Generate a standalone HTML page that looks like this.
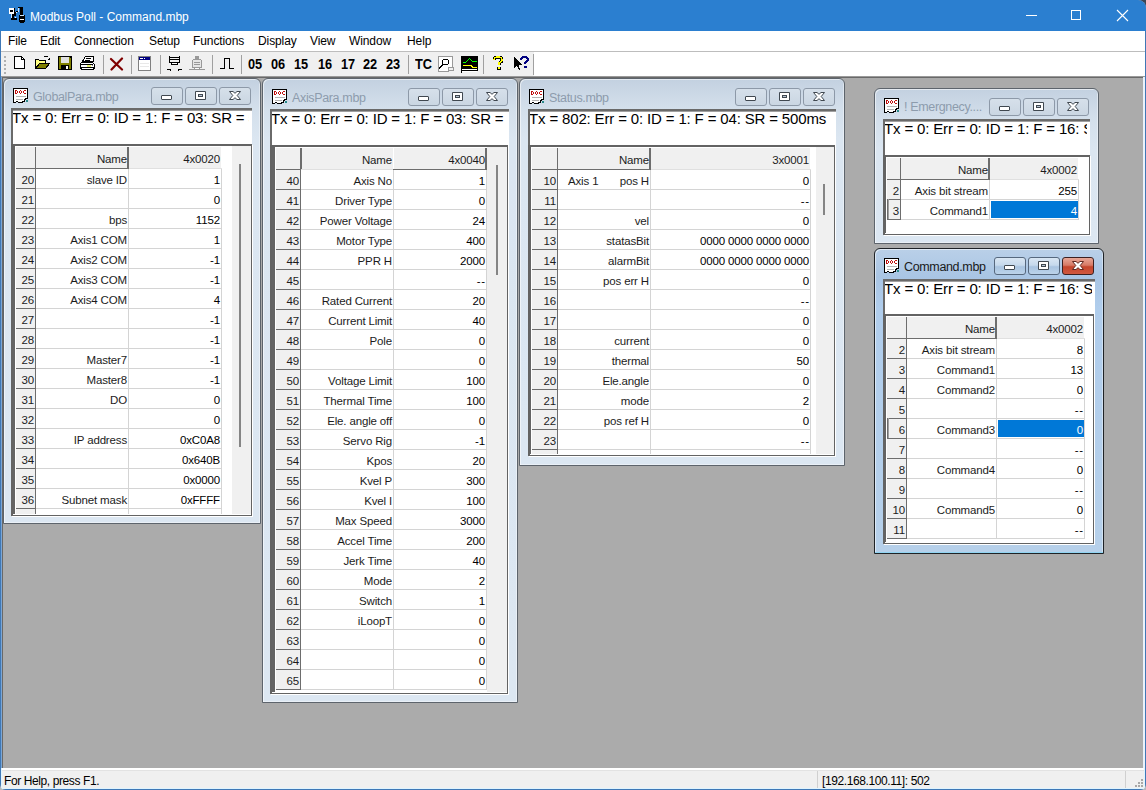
<!DOCTYPE html><html><head><meta charset="utf-8"><style>html,body{margin:0;padding:0;width:1146px;height:790px;overflow:hidden;background:#b4b8bc}</style></head><body><div style="position:absolute;left:1136px;top:0;width:10px;height:10px;background:#3a4656"></div>
<div style="position:absolute;left:0;top:0;width:1146px;height:790px;background:#ababab;overflow:hidden;border-radius:0 8px 6px 6px">
<div style="position:absolute;left:0px;top:0px;width:1146px;height:31px;background:#2b7fd0"></div>
<svg style="position:absolute;left:8px;top:6px" width="18" height="17" viewBox="0 0 18 17" shape-rendering="crispEdges"><rect x="1" y="2" width="6" height="6" fill="#000"/><rect x="1" y="2" width="5" height="6" fill="#fff"/><rect x="2" y="4" width="3" height="2" fill="#000"/><rect x="3" y="8" width="1" height="5" fill="#cfe8ff"/><rect x="4" y="8" width="2" height="5" fill="#000"/><rect x="3" y="12" width="6" height="2" fill="#000"/><rect x="7" y="11" width="1" height="1" fill="#fff"/><rect x="6" y="6" width="2" height="4" fill="#000"/><rect x="8" y="6" width="1" height="1" fill="#fff"/><rect x="8" y="5" width="2" height="1" fill="#000"/><rect x="10" y="1" width="5" height="1" fill="#000"/><rect x="10" y="2" width="1" height="4" fill="#cfe8ff"/><rect x="12" y="1" width="3" height="8" fill="#000"/><rect x="11" y="9" width="6" height="7" fill="#000"/><rect x="12" y="9" width="4" height="1" fill="#cfe8ff"/><rect x="12" y="13" width="4" height="1" fill="#fff"/><rect x="12" y="16" width="4" height="1" fill="#000"/></svg>
<div style="position:absolute;left:30px;top:10px;text-align:left;white-space:pre;font:12px 'Liberation Sans', sans-serif;color:#fff;line-height:14px">Modbus Poll - Command.mbp</div>
<div style="position:absolute;left:1026px;top:15px;width:11px;height:1px;background:#fff"></div>
<div style="position:absolute;left:1071px;top:10px;width:8px;height:8px;border:1px solid #fff"></div>
<svg style="position:absolute;left:1116px;top:9px" width="13" height="13"><path d="M1 1L12 12M12 1L1 12" stroke="#fff" stroke-width="1.1"/></svg>
<div style="position:absolute;left:0px;top:31px;width:1px;height:759px;background:#3f78b6"></div>
<div style="position:absolute;left:1145px;top:31px;width:1px;height:759px;background:#3f78b6"></div>
<div style="position:absolute;left:0px;top:789px;width:1146px;height:1px;background:#3f78b6"></div>
<div style="position:absolute;left:1px;top:31px;width:1144px;height:20px;background:#fff"></div>
<div style="position:absolute;left:8px;top:34px;text-align:left;white-space:pre;font:12px 'Liberation Sans', sans-serif;color:#000;line-height:14px;letter-spacing:-0.1px">File</div>
<div style="position:absolute;left:40px;top:34px;text-align:left;white-space:pre;font:12px 'Liberation Sans', sans-serif;color:#000;line-height:14px;letter-spacing:-0.1px">Edit</div>
<div style="position:absolute;left:74px;top:34px;text-align:left;white-space:pre;font:12px 'Liberation Sans', sans-serif;color:#000;line-height:14px;letter-spacing:-0.1px">Connection</div>
<div style="position:absolute;left:149px;top:34px;text-align:left;white-space:pre;font:12px 'Liberation Sans', sans-serif;color:#000;line-height:14px;letter-spacing:-0.1px">Setup</div>
<div style="position:absolute;left:193px;top:34px;text-align:left;white-space:pre;font:12px 'Liberation Sans', sans-serif;color:#000;line-height:14px;letter-spacing:-0.1px">Functions</div>
<div style="position:absolute;left:258px;top:34px;text-align:left;white-space:pre;font:12px 'Liberation Sans', sans-serif;color:#000;line-height:14px;letter-spacing:-0.1px">Display</div>
<div style="position:absolute;left:310px;top:34px;text-align:left;white-space:pre;font:12px 'Liberation Sans', sans-serif;color:#000;line-height:14px;letter-spacing:-0.1px">View</div>
<div style="position:absolute;left:349px;top:34px;text-align:left;white-space:pre;font:12px 'Liberation Sans', sans-serif;color:#000;line-height:14px;letter-spacing:-0.1px">Window</div>
<div style="position:absolute;left:407px;top:34px;text-align:left;white-space:pre;font:12px 'Liberation Sans', sans-serif;color:#000;line-height:14px;letter-spacing:-0.1px">Help</div>
<div style="position:absolute;left:1px;top:51px;width:1144px;height:1px;background:#bdbdbd"></div>
<div style="position:absolute;left:1px;top:52px;width:1144px;height:24px;background:#fff"></div>
<div style="position:absolute;left:1px;top:52px;width:533px;height:24px;background:#f0f0f0"></div>
<div style="position:absolute;left:533px;top:54px;width:1px;height:21px;background:#a0a0a0"></div>
<div style="position:absolute;left:4px;top:56px;width:2px;height:2px;background:#b0b0b0"></div>
<div style="position:absolute;left:4px;top:60px;width:2px;height:2px;background:#b0b0b0"></div>
<div style="position:absolute;left:4px;top:64px;width:2px;height:2px;background:#b0b0b0"></div>
<div style="position:absolute;left:4px;top:68px;width:2px;height:2px;background:#b0b0b0"></div>
<div style="position:absolute;left:4px;top:72px;width:2px;height:2px;background:#b0b0b0"></div>
<div style="position:absolute;left:103px;top:55px;width:1px;height:19px;background:#a0a0a0"></div>
<div style="position:absolute;left:131px;top:55px;width:1px;height:19px;background:#a0a0a0"></div>
<div style="position:absolute;left:160px;top:55px;width:1px;height:19px;background:#a0a0a0"></div>
<div style="position:absolute;left:212px;top:55px;width:1px;height:19px;background:#a0a0a0"></div>
<div style="position:absolute;left:241px;top:55px;width:1px;height:19px;background:#a0a0a0"></div>
<div style="position:absolute;left:408px;top:55px;width:1px;height:19px;background:#a0a0a0"></div>
<div style="position:absolute;left:483px;top:55px;width:1px;height:19px;background:#a0a0a0"></div>
<div style="position:absolute;left:248px;top:56px;white-space:pre;font:bold 14.5px 'Liberation Sans', sans-serif;color:#000;line-height:16px;transform:scaleX(0.88);transform-origin:0 0">05</div>
<div style="position:absolute;left:271px;top:56px;white-space:pre;font:bold 14.5px 'Liberation Sans', sans-serif;color:#000;line-height:16px;transform:scaleX(0.88);transform-origin:0 0">06</div>
<div style="position:absolute;left:294px;top:56px;white-space:pre;font:bold 14.5px 'Liberation Sans', sans-serif;color:#000;line-height:16px;transform:scaleX(0.88);transform-origin:0 0">15</div>
<div style="position:absolute;left:318px;top:56px;white-space:pre;font:bold 14.5px 'Liberation Sans', sans-serif;color:#000;line-height:16px;transform:scaleX(0.88);transform-origin:0 0">16</div>
<div style="position:absolute;left:341px;top:56px;white-space:pre;font:bold 14.5px 'Liberation Sans', sans-serif;color:#000;line-height:16px;transform:scaleX(0.88);transform-origin:0 0">17</div>
<div style="position:absolute;left:363px;top:56px;white-space:pre;font:bold 14.5px 'Liberation Sans', sans-serif;color:#000;line-height:16px;transform:scaleX(0.88);transform-origin:0 0">22</div>
<div style="position:absolute;left:386px;top:56px;white-space:pre;font:bold 14.5px 'Liberation Sans', sans-serif;color:#000;line-height:16px;transform:scaleX(0.88);transform-origin:0 0">23</div>
<div style="position:absolute;left:415px;top:56px;white-space:pre;font:bold 14.5px 'Liberation Sans', sans-serif;color:#000;line-height:16px;transform:scaleX(0.88);transform-origin:0 0">TC</div>
<svg style="position:absolute;left:14px;top:56px" width="12" height="14" viewBox="0 0 12 14" shape-rendering="crispEdges"><path d="M0.5 0.5H7.5L10.5 3.5V12.5H0.5Z" fill="#fff" stroke="#000"/><path d="M7.5 0.5V3.5H10.5" fill="none" stroke="#000"/></svg>
<svg style="position:absolute;left:32px;top:53px" width="20" height="20" viewBox="0 0 20 20" shape-rendering="crispEdges"><path d="M3.5 15.5V6.5H6.5L7.5 7.5H13.5V10.5" fill="#ffff80" stroke="#000"/><path d="M7.5 10.5H17.5L13.5 15.5H3.5Z" fill="#808000" stroke="#000"/><path d="M11.5 4.5L12.5 3.5H15.5L16.5 4.5" fill="none" stroke="#000"/><path d="M15 7H18V4Z" fill="#000"/></svg>
<svg style="position:absolute;left:58px;top:56px" width="15" height="15" viewBox="0 0 15 15" shape-rendering="crispEdges"><rect x="0.5" y="0.5" width="13" height="13" fill="#808000" stroke="#000"/><rect x="3" y="1" width="8" height="6" fill="#e0e0e0"/><rect x="3" y="9" width="8" height="5" fill="#000"/><rect x="8" y="10" width="2" height="3" fill="#fff"/><rect x="12" y="1" width="1" height="1" fill="#000"/></svg>
<svg style="position:absolute;left:78px;top:53px" width="20" height="20" viewBox="0 0 20 20" shape-rendering="crispEdges"><path d="M7.5 3.5H15.5V8.5H4.5Z" fill="#fff" stroke="#000"/><path d="M8 5.5H13M7 7.5H12" stroke="#000"/><path d="M2.5 10.5L3.5 9.5H14.5L16.5 11.5V14.5L15.5 16.5H3.5L2.5 14.5Z" fill="#fff" stroke="#000"/><path d="M3 11.5H15M3 14.5H16" stroke="#000"/><rect x="9" y="12" width="4" height="2" fill="#e8f070"/><rect x="14" y="9" width="1" height="1" fill="#000"/><rect x="15" y="10" width="1" height="1" fill="#000"/><rect x="14" y="12" width="1" height="1" fill="#888"/></svg>
<svg style="position:absolute;left:109px;top:57px" width="16" height="15"><path d="M2 2L13 12.5M13 1.5L2.5 12.5" stroke="#800000" stroke-width="2.2" stroke-linecap="round"/></svg>
<svg style="position:absolute;left:138px;top:56px" width="13" height="15" viewBox="0 0 13 15" shape-rendering="crispEdges"><rect x="0.5" y="0.5" width="12" height="14" fill="#fff" stroke="#808080"/><rect x="1" y="1" width="11" height="3" fill="#000080"/><rect x="2" y="2" width="3" height="1" fill="#fff"/><rect x="6" y="2" width="1" height="1" fill="#fff"/><path d="M2 7.5H11M2 10.5H11" stroke="#e8e8e8"/></svg>
<svg style="position:absolute;left:166px;top:55px" width="18" height="17" viewBox="0 0 18 17" shape-rendering="crispEdges"><path d="M3.5 1V7.5H13.5V1" fill="none" stroke="#000"/><path d="M4 2.5H13M4 4.5H13" stroke="#000"/><rect x="5.5" y="7.5" width="6" height="2" fill="#fff" stroke="#000"/><path d="M1 14.5H4.5V15.5" fill="none" stroke="#000"/><path d="M16 14.5H12.5V15.5" fill="none" stroke="#000"/></svg>
<svg style="position:absolute;left:189px;top:55px" width="18" height="17" viewBox="0 0 18 17" shape-rendering="crispEdges"><rect x="6" y="1" width="4" height="3" fill="#999"/><path d="M3.5 5.5L4.5 4.5H11.5L12.5 5.5V12.5H3.5Z" fill="#e6e6e6" stroke="#999"/><path d="M5 7.5H11M5 9.5H11" stroke="#999"/><path d="M0 14.5H16" stroke="#999"/><rect x="5.5" y="12.5" width="5" height="2" fill="#fff" stroke="#999"/></svg>
<svg style="position:absolute;left:219px;top:57px" width="16" height="13" viewBox="0 0 16 13" shape-rendering="crispEdges"><path d="M1 11.5H5.5V1.5H10.5V11.5H15" fill="none" stroke="#000" stroke-width="1.6"/></svg>
<svg style="position:absolute;left:437px;top:56px" width="18" height="17" viewBox="0 0 18 17" shape-rendering="crispEdges"><path d="M1.5 0.5H15.5V11.5H11.5V15.5H1.5Z" fill="#fff" stroke="#999"/><path d="M11.5 11.5H16.5V14.5H11.5" fill="none" stroke="#999"/><circle cx="8.5" cy="6" r="3" fill="#fff" stroke="#000"/><path d="M6.5 8L2 12.5" stroke="#000" stroke-width="2"/></svg>
<svg style="position:absolute;left:461px;top:56px" width="17" height="17" viewBox="0 0 17 17" shape-rendering="crispEdges"><rect x="1" y="0" width="16" height="15" fill="#000"/><rect x="0" y="0" width="1" height="17" fill="#000"/><path d="M1.5 6.5H4.5L8.5 2.5L11.5 5.5H16" fill="none" stroke="#00ff00"/><path d="M1.5 9.5H10.5L11.5 11.5H16" fill="none" stroke="#ffff00"/><path d="M1 13.5H16M1 15.5H16" stroke="#fff"/></svg>
<svg style="position:absolute;left:492px;top:56px" width="12" height="14" viewBox="0 0 12 14" shape-rendering="crispEdges"><path d="M2 4Q2 1 6 1Q10 1 10 4Q10 6 7 7V9" fill="none" stroke="#000" stroke-width="3"/><path d="M2 4Q2 1 6 1Q10 1 10 4Q10 6 7 7V9" fill="none" stroke="#ffff00" stroke-width="1.4"/><rect x="5" y="10.5" width="3.5" height="3" fill="#000"/><rect x="6" y="11" width="1.5" height="1.5" fill="#ff0"/></svg>
<svg style="position:absolute;left:513px;top:56px" width="18" height="15" viewBox="0 0 18 15" shape-rendering="crispEdges"><path d="M1 1V12L3.5 9.5L6 14H7.5L5.5 9H9Z" fill="#000"/><path d="M8 4Q8 1 11.5 1Q15 1 15 3.5Q15 5 12 6.5V8" fill="none" stroke="#000080" stroke-width="2.2"/><rect x="10.5" y="9.5" width="3" height="2" fill="#000080"/></svg>
<div style="position:absolute;left:1px;top:76px;width:1144px;height:1px;background:#9a9a9a"></div>
<div style="position:absolute;left:1px;top:77px;width:1144px;height:1px;background:#696969"></div>
<div style="position:absolute;left:1px;top:77px;width:1px;height:691px;background:#7aa6d6"></div>
<div style="position:absolute;left:2px;top:77px;width:1px;height:691px;background:#696969"></div>
<div style="position:absolute;left:1143px;top:77px;width:2px;height:691px;background:#eaf2fa"></div>
<div style="position:absolute;left:1px;top:768px;width:1144px;height:2px;background:#fff"></div>
<div style="position:absolute;left:1px;top:770px;width:1144px;height:1px;background:#e3e3e3"></div>
<div style="position:absolute;left:1px;top:771px;width:1144px;height:18px;background:#f0f0f0"></div>
<div style="position:absolute;left:817px;top:771px;width:1px;height:17px;background:#d0d0d0"></div>
<div style="position:absolute;left:1125px;top:771px;width:1px;height:17px;background:#d0d0d0"></div>
<div style="position:absolute;left:4px;top:774px;text-align:left;white-space:pre;font:12px 'Liberation Sans', sans-serif;color:#000;line-height:14px;letter-spacing:-0.4px">For Help, press F1.</div>
<div style="position:absolute;left:822px;top:774px;text-align:left;white-space:pre;font:12px 'Liberation Sans', sans-serif;color:#000;line-height:14px;letter-spacing:-0.4px">[192.168.100.11]: 502</div>
<div style="position:absolute;left:1px;top:768px;width:1px;height:21px;background:#dff4ff"></div>
<div style="position:absolute;left:1144px;top:768px;width:1px;height:21px;background:#dff4ff"></div>
<div style="position:absolute;left:1px;top:788px;width:1144px;height:1px;background:#dff4ff"></div>
<div style="position:absolute;left:1141px;top:779px;width:2px;height:2px;background:#a8a8a8"></div>
<div style="position:absolute;left:1138px;top:782px;width:2px;height:2px;background:#a8a8a8"></div>
<div style="position:absolute;left:1141px;top:782px;width:2px;height:2px;background:#a8a8a8"></div>
<div style="position:absolute;left:1135px;top:785px;width:2px;height:2px;background:#a8a8a8"></div>
<div style="position:absolute;left:1138px;top:785px;width:2px;height:2px;background:#a8a8a8"></div>
<div style="position:absolute;left:1141px;top:785px;width:2px;height:2px;background:#a8a8a8"></div>
<div style="position:absolute;left:3px;top:78px;width:256px;height:444px;border:1px solid #5d646c;border-radius:6px 6px 0 0;background:linear-gradient(#c3d1e0 0px,#d3dfeb 28px,#dbe6f1 60px,#dce7f2 100%);box-shadow:inset 1px 1px 0 rgba(255,255,255,0.55),inset -1px -1px 0 rgba(255,255,255,0.4)"></div>
<svg style="position:absolute;left:13px;top:88px" width="16" height="16" viewBox="0 0 16 16" shape-rendering="crispEdges"><rect x="1" y="1" width="13" height="9" fill="#fff"/><rect x="1" y="10" width="11" height="3" fill="#fff"/><rect x="1" y="13" width="8" height="1" fill="#fff"/><rect x="0" y="0" width="15" height="1" fill="#000"/><rect x="0" y="0" width="1" height="15" fill="#000"/><rect x="14" y="0" width="1" height="10" fill="#000"/><rect x="12" y="10" width="3" height="1" fill="#000"/><rect x="11" y="11" width="2" height="1" fill="#000"/><rect x="11" y="12" width="1" height="1" fill="#000"/><rect x="9" y="13" width="3" height="1" fill="#000"/><rect x="8" y="14" width="2" height="1" fill="#000"/><rect x="5" y="14" width="3" height="1" fill="#000"/><rect x="3" y="13" width="2" height="1" fill="#000"/><rect x="1" y="14" width="2" height="1" fill="#000"/><rect x="2" y="2" width="1" height="4" fill="#c01010"/><rect x="3" y="2" width="1" height="1" fill="#c01010"/><rect x="3" y="5" width="1" height="1" fill="#c01010"/><rect x="4" y="3" width="1" height="2" fill="#c01010"/><rect x="7" y="2" width="1" height="1" fill="#c01010"/><rect x="6" y="3" width="1" height="2" fill="#c01010"/><rect x="8" y="3" width="1" height="2" fill="#c01010"/><rect x="7" y="5" width="1" height="1" fill="#c01010"/><rect x="11" y="2" width="2" height="1" fill="#c01010"/><rect x="10" y="3" width="1" height="2" fill="#c01010"/><rect x="11" y="5" width="2" height="1" fill="#c01010"/><rect x="3" y="8" width="10" height="1" fill="#b4b4b4"/><rect x="3" y="11" width="7" height="1" fill="#b4b4b4"/><rect x="13" y="12" width="2" height="2" fill="#2a8a8a"/></svg>
<div style="position:absolute;left:33px;top:90px;text-align:left;white-space:pre;font:12.5px 'Liberation Sans', sans-serif;color:#8d9cad;line-height:15px;letter-spacing:-0.35px">GlobalPara.mbp</div>
<div style="position:absolute;left:151px;top:87px;width:30px;height:16px;border-radius:3px;background:linear-gradient(#d6e0ea,#cad6e2);border:1px solid #8d99a8"></div>
<div style="position:absolute;left:161px;top:95px;width:9px;height:3px;background:#fff;border:1px solid #404850;border-radius:1px"></div>
<div style="position:absolute;left:185px;top:87px;width:30px;height:16px;border-radius:3px;background:linear-gradient(#d6e0ea,#cad6e2);border:1px solid #8d99a8"></div>
<div style="position:absolute;left:195px;top:91px;width:11px;height:9px;background:#404850;border-radius:1px"></div>
<div style="position:absolute;left:196px;top:92px;width:9px;height:7px;background:#fff"></div>
<div style="position:absolute;left:198px;top:94px;width:5px;height:3px;background:#404850"></div>
<div style="position:absolute;left:199px;top:95px;width:3px;height:1px;background:#b8c6d4"></div>
<div style="position:absolute;left:219px;top:87px;width:30px;height:16px;border-radius:3px;background:linear-gradient(#d6e0ea,#cad6e2);border:1px solid #8d99a8"></div>
<svg style="position:absolute;left:228px;top:90px" width="14" height="12"><path d="M1.5 1.5H5L7 3.3L9 1.5H12.5L9.2 5.5L12.5 9.5H9L7 7.7L5 9.5H1.5L4.8 5.5Z" fill="#fff" stroke="#404850" stroke-width="1" stroke-linejoin="round"/></svg>
<div style="position:absolute;left:11px;top:108px;width:239px;height:35px;background:#fff;border-top:2px solid #6a6a6a;border-left:2px solid #6a6a6a;box-shadow:inset 0 1px 0 #a0a0a0"></div>
<div style="position:absolute;left:13px;top:110px;width:236px;height:34px;overflow:hidden">
<div style="position:absolute;left:-1px;top:-1px;text-align:left;white-space:pre;font:15px 'Liberation Sans', sans-serif;color:#000;letter-spacing:-0.15px;line-height:17px">Tx = 0: Err = 0: ID = 1: F = 03: SR = 500ms</div>
</div>
<div style="position:absolute;left:11px;top:144px;width:238px;height:369px;background:#fff;border-top:2px solid #636363;border-left:2px solid #636363;border-right:1px solid #636363;border-bottom:1px solid #636363;box-shadow:inset -1px -1px 0 #fff, 1px 1px 0 #fff"></div>
<div style="position:absolute;left:13px;top:146px;width:2px;height:368px;background:#646464"></div>
<div style="position:absolute;left:13px;top:146px;width:237px;height:0px;background:#8a8a8a"></div>
<div style="position:absolute;left:232px;top:146px;width:19px;height:368px;background:#f0f0f0"></div>
<div style="position:absolute;left:239px;top:164px;width:2px;height:283px;background:#858585"></div>
<div style="position:absolute;left:16px;top:147px;width:205px;height:21px;background:#f0f0f0"></div>
<div style="position:absolute;left:16px;top:168px;width:19px;height:346px;background:#f0f0f0"></div>
<div style="position:absolute;left:35px;top:147px;width:1px;height:367px;background:#6d6d6d"></div>
<div style="position:absolute;left:16px;top:168px;width:19px;height:1px;background:#6d6d6d"></div>
<div style="position:absolute;left:36px;top:168px;width:94px;height:1px;background:#6d6d6d"></div>
<div style="position:absolute;left:127px;top:147px;width:2px;height:21px;background:#6d6d6d"></div>
<div style="position:absolute;left:129px;top:168px;width:93px;height:1px;background:#e0e0e0"></div>
<div style="position:absolute;left:128px;top:169px;width:1px;height:345px;background:#d4d4d4"></div>
<div style="position:absolute;left:221px;top:169px;width:1px;height:345px;background:#d4d4d4"></div>
<div style="position:absolute;left:36px;top:152px;width:91px;text-align:right;white-space:pre;font:11.5px 'Liberation Sans', sans-serif;color:#1c1c1c;line-height:14px;letter-spacing:-0.15px">Name</div>
<div style="position:absolute;left:129px;top:152px;width:91px;text-align:right;white-space:pre;font:11.5px 'Liberation Sans', sans-serif;color:#1c1c1c;line-height:14px;letter-spacing:-0.15px">4x0020</div>
<div style="position:absolute;left:16px;top:188px;width:19px;height:1px;background:#6d6d6d"></div>
<div style="position:absolute;left:36px;top:188px;width:186px;height:1px;background:#d4d4d4"></div>
<div style="position:absolute;left:16px;top:169px;width:205px;height:19px;overflow:hidden">
<div style="position:absolute;left:0px;top:4px;width:18px;text-align:right;white-space:pre;font:11.5px 'Liberation Sans', sans-serif;color:#1c1c1c;line-height:14px;letter-spacing:-0.15px">20</div>
<div style="position:absolute;left:20px;top:4px;width:91px;text-align:right;white-space:pre;font:11.5px 'Liberation Sans', sans-serif;color:#1c1c1c;line-height:14px;letter-spacing:-0.15px">slave ID</div>
<div style="position:absolute;left:113px;top:4px;width:91px;text-align:right;white-space:pre;font:11.5px 'Liberation Sans', sans-serif;color:#1c1c1c;line-height:14px;letter-spacing:-0.15px;color:#000">1</div>
</div>
<div style="position:absolute;left:16px;top:208px;width:19px;height:1px;background:#6d6d6d"></div>
<div style="position:absolute;left:36px;top:208px;width:186px;height:1px;background:#d4d4d4"></div>
<div style="position:absolute;left:16px;top:189px;width:205px;height:19px;overflow:hidden">
<div style="position:absolute;left:0px;top:4px;width:18px;text-align:right;white-space:pre;font:11.5px 'Liberation Sans', sans-serif;color:#1c1c1c;line-height:14px;letter-spacing:-0.15px">21</div>
<div style="position:absolute;left:20px;top:4px;width:91px;text-align:right;white-space:pre;font:11.5px 'Liberation Sans', sans-serif;color:#1c1c1c;line-height:14px;letter-spacing:-0.15px"></div>
<div style="position:absolute;left:113px;top:4px;width:91px;text-align:right;white-space:pre;font:11.5px 'Liberation Sans', sans-serif;color:#1c1c1c;line-height:14px;letter-spacing:-0.15px;color:#000">0</div>
</div>
<div style="position:absolute;left:16px;top:228px;width:19px;height:1px;background:#6d6d6d"></div>
<div style="position:absolute;left:36px;top:228px;width:186px;height:1px;background:#d4d4d4"></div>
<div style="position:absolute;left:16px;top:209px;width:205px;height:19px;overflow:hidden">
<div style="position:absolute;left:0px;top:4px;width:18px;text-align:right;white-space:pre;font:11.5px 'Liberation Sans', sans-serif;color:#1c1c1c;line-height:14px;letter-spacing:-0.15px">22</div>
<div style="position:absolute;left:20px;top:4px;width:91px;text-align:right;white-space:pre;font:11.5px 'Liberation Sans', sans-serif;color:#1c1c1c;line-height:14px;letter-spacing:-0.15px">bps</div>
<div style="position:absolute;left:113px;top:4px;width:91px;text-align:right;white-space:pre;font:11.5px 'Liberation Sans', sans-serif;color:#1c1c1c;line-height:14px;letter-spacing:-0.15px;color:#000">1152</div>
</div>
<div style="position:absolute;left:16px;top:248px;width:19px;height:1px;background:#6d6d6d"></div>
<div style="position:absolute;left:36px;top:248px;width:186px;height:1px;background:#d4d4d4"></div>
<div style="position:absolute;left:16px;top:229px;width:205px;height:19px;overflow:hidden">
<div style="position:absolute;left:0px;top:4px;width:18px;text-align:right;white-space:pre;font:11.5px 'Liberation Sans', sans-serif;color:#1c1c1c;line-height:14px;letter-spacing:-0.15px">23</div>
<div style="position:absolute;left:20px;top:4px;width:91px;text-align:right;white-space:pre;font:11.5px 'Liberation Sans', sans-serif;color:#1c1c1c;line-height:14px;letter-spacing:-0.15px">Axis1 COM</div>
<div style="position:absolute;left:113px;top:4px;width:91px;text-align:right;white-space:pre;font:11.5px 'Liberation Sans', sans-serif;color:#1c1c1c;line-height:14px;letter-spacing:-0.15px;color:#000">1</div>
</div>
<div style="position:absolute;left:16px;top:268px;width:19px;height:1px;background:#6d6d6d"></div>
<div style="position:absolute;left:36px;top:268px;width:186px;height:1px;background:#d4d4d4"></div>
<div style="position:absolute;left:16px;top:249px;width:205px;height:19px;overflow:hidden">
<div style="position:absolute;left:0px;top:4px;width:18px;text-align:right;white-space:pre;font:11.5px 'Liberation Sans', sans-serif;color:#1c1c1c;line-height:14px;letter-spacing:-0.15px">24</div>
<div style="position:absolute;left:20px;top:4px;width:91px;text-align:right;white-space:pre;font:11.5px 'Liberation Sans', sans-serif;color:#1c1c1c;line-height:14px;letter-spacing:-0.15px">Axis2 COM</div>
<div style="position:absolute;left:113px;top:4px;width:91px;text-align:right;white-space:pre;font:11.5px 'Liberation Sans', sans-serif;color:#1c1c1c;line-height:14px;letter-spacing:-0.15px;color:#000">-1</div>
</div>
<div style="position:absolute;left:16px;top:288px;width:19px;height:1px;background:#6d6d6d"></div>
<div style="position:absolute;left:36px;top:288px;width:186px;height:1px;background:#d4d4d4"></div>
<div style="position:absolute;left:16px;top:269px;width:205px;height:19px;overflow:hidden">
<div style="position:absolute;left:0px;top:4px;width:18px;text-align:right;white-space:pre;font:11.5px 'Liberation Sans', sans-serif;color:#1c1c1c;line-height:14px;letter-spacing:-0.15px">25</div>
<div style="position:absolute;left:20px;top:4px;width:91px;text-align:right;white-space:pre;font:11.5px 'Liberation Sans', sans-serif;color:#1c1c1c;line-height:14px;letter-spacing:-0.15px">Axis3 COM</div>
<div style="position:absolute;left:113px;top:4px;width:91px;text-align:right;white-space:pre;font:11.5px 'Liberation Sans', sans-serif;color:#1c1c1c;line-height:14px;letter-spacing:-0.15px;color:#000">-1</div>
</div>
<div style="position:absolute;left:16px;top:308px;width:19px;height:1px;background:#6d6d6d"></div>
<div style="position:absolute;left:36px;top:308px;width:186px;height:1px;background:#d4d4d4"></div>
<div style="position:absolute;left:16px;top:289px;width:205px;height:19px;overflow:hidden">
<div style="position:absolute;left:0px;top:4px;width:18px;text-align:right;white-space:pre;font:11.5px 'Liberation Sans', sans-serif;color:#1c1c1c;line-height:14px;letter-spacing:-0.15px">26</div>
<div style="position:absolute;left:20px;top:4px;width:91px;text-align:right;white-space:pre;font:11.5px 'Liberation Sans', sans-serif;color:#1c1c1c;line-height:14px;letter-spacing:-0.15px">Axis4 COM</div>
<div style="position:absolute;left:113px;top:4px;width:91px;text-align:right;white-space:pre;font:11.5px 'Liberation Sans', sans-serif;color:#1c1c1c;line-height:14px;letter-spacing:-0.15px;color:#000">4</div>
</div>
<div style="position:absolute;left:16px;top:328px;width:19px;height:1px;background:#6d6d6d"></div>
<div style="position:absolute;left:36px;top:328px;width:186px;height:1px;background:#d4d4d4"></div>
<div style="position:absolute;left:16px;top:309px;width:205px;height:19px;overflow:hidden">
<div style="position:absolute;left:0px;top:4px;width:18px;text-align:right;white-space:pre;font:11.5px 'Liberation Sans', sans-serif;color:#1c1c1c;line-height:14px;letter-spacing:-0.15px">27</div>
<div style="position:absolute;left:20px;top:4px;width:91px;text-align:right;white-space:pre;font:11.5px 'Liberation Sans', sans-serif;color:#1c1c1c;line-height:14px;letter-spacing:-0.15px"></div>
<div style="position:absolute;left:113px;top:4px;width:91px;text-align:right;white-space:pre;font:11.5px 'Liberation Sans', sans-serif;color:#1c1c1c;line-height:14px;letter-spacing:-0.15px;color:#000">-1</div>
</div>
<div style="position:absolute;left:16px;top:348px;width:19px;height:1px;background:#6d6d6d"></div>
<div style="position:absolute;left:36px;top:348px;width:186px;height:1px;background:#d4d4d4"></div>
<div style="position:absolute;left:16px;top:329px;width:205px;height:19px;overflow:hidden">
<div style="position:absolute;left:0px;top:4px;width:18px;text-align:right;white-space:pre;font:11.5px 'Liberation Sans', sans-serif;color:#1c1c1c;line-height:14px;letter-spacing:-0.15px">28</div>
<div style="position:absolute;left:20px;top:4px;width:91px;text-align:right;white-space:pre;font:11.5px 'Liberation Sans', sans-serif;color:#1c1c1c;line-height:14px;letter-spacing:-0.15px"></div>
<div style="position:absolute;left:113px;top:4px;width:91px;text-align:right;white-space:pre;font:11.5px 'Liberation Sans', sans-serif;color:#1c1c1c;line-height:14px;letter-spacing:-0.15px;color:#000">-1</div>
</div>
<div style="position:absolute;left:16px;top:368px;width:19px;height:1px;background:#6d6d6d"></div>
<div style="position:absolute;left:36px;top:368px;width:186px;height:1px;background:#d4d4d4"></div>
<div style="position:absolute;left:16px;top:349px;width:205px;height:19px;overflow:hidden">
<div style="position:absolute;left:0px;top:4px;width:18px;text-align:right;white-space:pre;font:11.5px 'Liberation Sans', sans-serif;color:#1c1c1c;line-height:14px;letter-spacing:-0.15px">29</div>
<div style="position:absolute;left:20px;top:4px;width:91px;text-align:right;white-space:pre;font:11.5px 'Liberation Sans', sans-serif;color:#1c1c1c;line-height:14px;letter-spacing:-0.15px">Master7</div>
<div style="position:absolute;left:113px;top:4px;width:91px;text-align:right;white-space:pre;font:11.5px 'Liberation Sans', sans-serif;color:#1c1c1c;line-height:14px;letter-spacing:-0.15px;color:#000">-1</div>
</div>
<div style="position:absolute;left:16px;top:388px;width:19px;height:1px;background:#6d6d6d"></div>
<div style="position:absolute;left:36px;top:388px;width:186px;height:1px;background:#d4d4d4"></div>
<div style="position:absolute;left:16px;top:369px;width:205px;height:19px;overflow:hidden">
<div style="position:absolute;left:0px;top:4px;width:18px;text-align:right;white-space:pre;font:11.5px 'Liberation Sans', sans-serif;color:#1c1c1c;line-height:14px;letter-spacing:-0.15px">30</div>
<div style="position:absolute;left:20px;top:4px;width:91px;text-align:right;white-space:pre;font:11.5px 'Liberation Sans', sans-serif;color:#1c1c1c;line-height:14px;letter-spacing:-0.15px">Master8</div>
<div style="position:absolute;left:113px;top:4px;width:91px;text-align:right;white-space:pre;font:11.5px 'Liberation Sans', sans-serif;color:#1c1c1c;line-height:14px;letter-spacing:-0.15px;color:#000">-1</div>
</div>
<div style="position:absolute;left:16px;top:408px;width:19px;height:1px;background:#6d6d6d"></div>
<div style="position:absolute;left:36px;top:408px;width:186px;height:1px;background:#d4d4d4"></div>
<div style="position:absolute;left:16px;top:389px;width:205px;height:19px;overflow:hidden">
<div style="position:absolute;left:0px;top:4px;width:18px;text-align:right;white-space:pre;font:11.5px 'Liberation Sans', sans-serif;color:#1c1c1c;line-height:14px;letter-spacing:-0.15px">31</div>
<div style="position:absolute;left:20px;top:4px;width:91px;text-align:right;white-space:pre;font:11.5px 'Liberation Sans', sans-serif;color:#1c1c1c;line-height:14px;letter-spacing:-0.15px">DO</div>
<div style="position:absolute;left:113px;top:4px;width:91px;text-align:right;white-space:pre;font:11.5px 'Liberation Sans', sans-serif;color:#1c1c1c;line-height:14px;letter-spacing:-0.15px;color:#000">0</div>
</div>
<div style="position:absolute;left:16px;top:428px;width:19px;height:1px;background:#6d6d6d"></div>
<div style="position:absolute;left:36px;top:428px;width:186px;height:1px;background:#d4d4d4"></div>
<div style="position:absolute;left:16px;top:409px;width:205px;height:19px;overflow:hidden">
<div style="position:absolute;left:0px;top:4px;width:18px;text-align:right;white-space:pre;font:11.5px 'Liberation Sans', sans-serif;color:#1c1c1c;line-height:14px;letter-spacing:-0.15px">32</div>
<div style="position:absolute;left:20px;top:4px;width:91px;text-align:right;white-space:pre;font:11.5px 'Liberation Sans', sans-serif;color:#1c1c1c;line-height:14px;letter-spacing:-0.15px"></div>
<div style="position:absolute;left:113px;top:4px;width:91px;text-align:right;white-space:pre;font:11.5px 'Liberation Sans', sans-serif;color:#1c1c1c;line-height:14px;letter-spacing:-0.15px;color:#000">0</div>
</div>
<div style="position:absolute;left:16px;top:448px;width:19px;height:1px;background:#6d6d6d"></div>
<div style="position:absolute;left:36px;top:448px;width:186px;height:1px;background:#d4d4d4"></div>
<div style="position:absolute;left:16px;top:429px;width:205px;height:19px;overflow:hidden">
<div style="position:absolute;left:0px;top:4px;width:18px;text-align:right;white-space:pre;font:11.5px 'Liberation Sans', sans-serif;color:#1c1c1c;line-height:14px;letter-spacing:-0.15px">33</div>
<div style="position:absolute;left:20px;top:4px;width:91px;text-align:right;white-space:pre;font:11.5px 'Liberation Sans', sans-serif;color:#1c1c1c;line-height:14px;letter-spacing:-0.15px">IP address</div>
<div style="position:absolute;left:113px;top:4px;width:91px;text-align:right;white-space:pre;font:11.5px 'Liberation Sans', sans-serif;color:#1c1c1c;line-height:14px;letter-spacing:-0.15px;color:#000">0xC0A8</div>
</div>
<div style="position:absolute;left:16px;top:468px;width:19px;height:1px;background:#6d6d6d"></div>
<div style="position:absolute;left:36px;top:468px;width:186px;height:1px;background:#d4d4d4"></div>
<div style="position:absolute;left:16px;top:449px;width:205px;height:19px;overflow:hidden">
<div style="position:absolute;left:0px;top:4px;width:18px;text-align:right;white-space:pre;font:11.5px 'Liberation Sans', sans-serif;color:#1c1c1c;line-height:14px;letter-spacing:-0.15px">34</div>
<div style="position:absolute;left:20px;top:4px;width:91px;text-align:right;white-space:pre;font:11.5px 'Liberation Sans', sans-serif;color:#1c1c1c;line-height:14px;letter-spacing:-0.15px"></div>
<div style="position:absolute;left:113px;top:4px;width:91px;text-align:right;white-space:pre;font:11.5px 'Liberation Sans', sans-serif;color:#1c1c1c;line-height:14px;letter-spacing:-0.15px;color:#000">0x640B</div>
</div>
<div style="position:absolute;left:16px;top:488px;width:19px;height:1px;background:#6d6d6d"></div>
<div style="position:absolute;left:36px;top:488px;width:186px;height:1px;background:#d4d4d4"></div>
<div style="position:absolute;left:16px;top:469px;width:205px;height:19px;overflow:hidden">
<div style="position:absolute;left:0px;top:4px;width:18px;text-align:right;white-space:pre;font:11.5px 'Liberation Sans', sans-serif;color:#1c1c1c;line-height:14px;letter-spacing:-0.15px">35</div>
<div style="position:absolute;left:20px;top:4px;width:91px;text-align:right;white-space:pre;font:11.5px 'Liberation Sans', sans-serif;color:#1c1c1c;line-height:14px;letter-spacing:-0.15px"></div>
<div style="position:absolute;left:113px;top:4px;width:91px;text-align:right;white-space:pre;font:11.5px 'Liberation Sans', sans-serif;color:#1c1c1c;line-height:14px;letter-spacing:-0.15px;color:#000">0x0000</div>
</div>
<div style="position:absolute;left:16px;top:508px;width:19px;height:1px;background:#6d6d6d"></div>
<div style="position:absolute;left:36px;top:508px;width:186px;height:1px;background:#d4d4d4"></div>
<div style="position:absolute;left:16px;top:489px;width:205px;height:19px;overflow:hidden">
<div style="position:absolute;left:0px;top:4px;width:18px;text-align:right;white-space:pre;font:11.5px 'Liberation Sans', sans-serif;color:#1c1c1c;line-height:14px;letter-spacing:-0.15px">36</div>
<div style="position:absolute;left:20px;top:4px;width:91px;text-align:right;white-space:pre;font:11.5px 'Liberation Sans', sans-serif;color:#1c1c1c;line-height:14px;letter-spacing:-0.15px">Subnet mask</div>
<div style="position:absolute;left:113px;top:4px;width:91px;text-align:right;white-space:pre;font:11.5px 'Liberation Sans', sans-serif;color:#1c1c1c;line-height:14px;letter-spacing:-0.15px;color:#000">0xFFFF</div>
</div>
<div style="position:absolute;left:16px;top:509px;width:205px;height:5px;overflow:hidden">
<div style="position:absolute;left:0px;top:4px;width:18px;text-align:right;white-space:pre;font:11.5px 'Liberation Sans', sans-serif;color:#1c1c1c;line-height:14px;letter-spacing:-0.15px">37</div>
<div style="position:absolute;left:20px;top:4px;width:91px;text-align:right;white-space:pre;font:11.5px 'Liberation Sans', sans-serif;color:#1c1c1c;line-height:14px;letter-spacing:-0.15px"></div>
<div style="position:absolute;left:113px;top:4px;width:91px;text-align:right;white-space:pre;font:11.5px 'Liberation Sans', sans-serif;color:#1c1c1c;line-height:14px;letter-spacing:-0.15px;color:#000"></div>
</div>
<div style="position:absolute;left:262px;top:78px;width:254px;height:623px;border:1px solid #5d646c;border-radius:6px 6px 0 0;background:linear-gradient(#c3d1e0 0px,#d3dfeb 28px,#dbe6f1 60px,#dce7f2 100%);box-shadow:inset 1px 1px 0 rgba(255,255,255,0.55),inset -1px -1px 0 rgba(255,255,255,0.4)"></div>
<svg style="position:absolute;left:272px;top:89px" width="16" height="16" viewBox="0 0 16 16" shape-rendering="crispEdges"><rect x="1" y="1" width="13" height="9" fill="#fff"/><rect x="1" y="10" width="11" height="3" fill="#fff"/><rect x="1" y="13" width="8" height="1" fill="#fff"/><rect x="0" y="0" width="15" height="1" fill="#000"/><rect x="0" y="0" width="1" height="15" fill="#000"/><rect x="14" y="0" width="1" height="10" fill="#000"/><rect x="12" y="10" width="3" height="1" fill="#000"/><rect x="11" y="11" width="2" height="1" fill="#000"/><rect x="11" y="12" width="1" height="1" fill="#000"/><rect x="9" y="13" width="3" height="1" fill="#000"/><rect x="8" y="14" width="2" height="1" fill="#000"/><rect x="5" y="14" width="3" height="1" fill="#000"/><rect x="3" y="13" width="2" height="1" fill="#000"/><rect x="1" y="14" width="2" height="1" fill="#000"/><rect x="2" y="2" width="1" height="4" fill="#c01010"/><rect x="3" y="2" width="1" height="1" fill="#c01010"/><rect x="3" y="5" width="1" height="1" fill="#c01010"/><rect x="4" y="3" width="1" height="2" fill="#c01010"/><rect x="7" y="2" width="1" height="1" fill="#c01010"/><rect x="6" y="3" width="1" height="2" fill="#c01010"/><rect x="8" y="3" width="1" height="2" fill="#c01010"/><rect x="7" y="5" width="1" height="1" fill="#c01010"/><rect x="11" y="2" width="2" height="1" fill="#c01010"/><rect x="10" y="3" width="1" height="2" fill="#c01010"/><rect x="11" y="5" width="2" height="1" fill="#c01010"/><rect x="3" y="8" width="10" height="1" fill="#b4b4b4"/><rect x="3" y="11" width="7" height="1" fill="#b4b4b4"/><rect x="13" y="12" width="2" height="2" fill="#2a8a8a"/></svg>
<div style="position:absolute;left:292px;top:91px;text-align:left;white-space:pre;font:12.5px 'Liberation Sans', sans-serif;color:#8d9cad;line-height:15px;letter-spacing:-0.35px">AxisPara.mbp</div>
<div style="position:absolute;left:408px;top:88px;width:30px;height:16px;border-radius:3px;background:linear-gradient(#d6e0ea,#cad6e2);border:1px solid #8d99a8"></div>
<div style="position:absolute;left:418px;top:96px;width:9px;height:3px;background:#fff;border:1px solid #404850;border-radius:1px"></div>
<div style="position:absolute;left:442px;top:88px;width:30px;height:16px;border-radius:3px;background:linear-gradient(#d6e0ea,#cad6e2);border:1px solid #8d99a8"></div>
<div style="position:absolute;left:452px;top:92px;width:11px;height:9px;background:#404850;border-radius:1px"></div>
<div style="position:absolute;left:453px;top:93px;width:9px;height:7px;background:#fff"></div>
<div style="position:absolute;left:455px;top:95px;width:5px;height:3px;background:#404850"></div>
<div style="position:absolute;left:456px;top:96px;width:3px;height:1px;background:#b8c6d4"></div>
<div style="position:absolute;left:476px;top:88px;width:30px;height:16px;border-radius:3px;background:linear-gradient(#d6e0ea,#cad6e2);border:1px solid #8d99a8"></div>
<svg style="position:absolute;left:485px;top:91px" width="14" height="12"><path d="M1.5 1.5H5L7 3.3L9 1.5H12.5L9.2 5.5L12.5 9.5H9L7 7.7L5 9.5H1.5L4.8 5.5Z" fill="#fff" stroke="#404850" stroke-width="1" stroke-linejoin="round"/></svg>
<div style="position:absolute;left:270px;top:109px;width:237px;height:35px;background:#fff;border-top:2px solid #6a6a6a;border-left:2px solid #6a6a6a;box-shadow:inset 0 1px 0 #a0a0a0"></div>
<div style="position:absolute;left:272px;top:111px;width:234px;height:34px;overflow:hidden">
<div style="position:absolute;left:-1px;top:-1px;text-align:left;white-space:pre;font:15px 'Liberation Sans', sans-serif;color:#000;letter-spacing:-0.15px;line-height:17px">Tx = 0: Err = 0: ID = 1: F = 03: SR = 500ms</div>
</div>
<div style="position:absolute;left:270px;top:145px;width:235px;height:546px;background:#fff;border-top:2px solid #636363;border-left:2px solid #636363;border-right:1px solid #636363;border-bottom:1px solid #636363;box-shadow:inset -1px -1px 0 #fff, 1px 1px 0 #fff"></div>
<div style="position:absolute;left:272px;top:147px;width:3px;height:545px;background:#646464"></div>
<div style="position:absolute;left:272px;top:147px;width:234px;height:0px;background:#8a8a8a"></div>
<div style="position:absolute;left:487px;top:147px;width:20px;height:545px;background:#f0f0f0"></div>
<div style="position:absolute;left:496px;top:165px;width:2px;height:110px;background:#858585"></div>
<div style="position:absolute;left:276px;top:148px;width:210px;height:21px;background:#f0f0f0"></div>
<div style="position:absolute;left:276px;top:169px;width:24px;height:521px;background:#f0f0f0"></div>
<div style="position:absolute;left:300px;top:148px;width:1px;height:542px;background:#6d6d6d"></div>
<div style="position:absolute;left:276px;top:169px;width:24px;height:1px;background:#6d6d6d"></div>
<div style="position:absolute;left:393px;top:169px;width:94px;height:1px;background:#6d6d6d"></div>
<div style="position:absolute;left:485px;top:148px;width:2px;height:21px;background:#6d6d6d"></div>
<div style="position:absolute;left:301px;top:148px;width:1px;height:21px;background:#6d6d6d"></div>
<div style="position:absolute;left:393px;top:148px;width:1px;height:21px;background:#ffffff"></div>
<div style="position:absolute;left:301px;top:169px;width:92px;height:1px;background:#e0e0e0"></div>
<div style="position:absolute;left:393px;top:170px;width:1px;height:520px;background:#d4d4d4"></div>
<div style="position:absolute;left:486px;top:170px;width:1px;height:520px;background:#d4d4d4"></div>
<div style="position:absolute;left:301px;top:153px;width:91px;text-align:right;white-space:pre;font:11.5px 'Liberation Sans', sans-serif;color:#1c1c1c;line-height:14px;letter-spacing:-0.15px">Name</div>
<div style="position:absolute;left:394px;top:153px;width:91px;text-align:right;white-space:pre;font:11.5px 'Liberation Sans', sans-serif;color:#1c1c1c;line-height:14px;letter-spacing:-0.15px">4x0040</div>
<div style="position:absolute;left:276px;top:189px;width:24px;height:1px;background:#6d6d6d"></div>
<div style="position:absolute;left:301px;top:189px;width:186px;height:1px;background:#d4d4d4"></div>
<div style="position:absolute;left:276px;top:170px;width:210px;height:19px;overflow:hidden">
<div style="position:absolute;left:0px;top:4px;width:23px;text-align:right;white-space:pre;font:11.5px 'Liberation Sans', sans-serif;color:#1c1c1c;line-height:14px;letter-spacing:-0.15px">40</div>
<div style="position:absolute;left:25px;top:4px;width:91px;text-align:right;white-space:pre;font:11.5px 'Liberation Sans', sans-serif;color:#1c1c1c;line-height:14px;letter-spacing:-0.15px">Axis No</div>
<div style="position:absolute;left:118px;top:4px;width:91px;text-align:right;white-space:pre;font:11.5px 'Liberation Sans', sans-serif;color:#1c1c1c;line-height:14px;letter-spacing:-0.15px;color:#000">1</div>
</div>
<div style="position:absolute;left:276px;top:209px;width:24px;height:1px;background:#6d6d6d"></div>
<div style="position:absolute;left:301px;top:209px;width:186px;height:1px;background:#d4d4d4"></div>
<div style="position:absolute;left:276px;top:190px;width:210px;height:19px;overflow:hidden">
<div style="position:absolute;left:0px;top:4px;width:23px;text-align:right;white-space:pre;font:11.5px 'Liberation Sans', sans-serif;color:#1c1c1c;line-height:14px;letter-spacing:-0.15px">41</div>
<div style="position:absolute;left:25px;top:4px;width:91px;text-align:right;white-space:pre;font:11.5px 'Liberation Sans', sans-serif;color:#1c1c1c;line-height:14px;letter-spacing:-0.15px">Driver Type</div>
<div style="position:absolute;left:118px;top:4px;width:91px;text-align:right;white-space:pre;font:11.5px 'Liberation Sans', sans-serif;color:#1c1c1c;line-height:14px;letter-spacing:-0.15px;color:#000">0</div>
</div>
<div style="position:absolute;left:276px;top:229px;width:24px;height:1px;background:#6d6d6d"></div>
<div style="position:absolute;left:301px;top:229px;width:186px;height:1px;background:#d4d4d4"></div>
<div style="position:absolute;left:276px;top:210px;width:210px;height:19px;overflow:hidden">
<div style="position:absolute;left:0px;top:4px;width:23px;text-align:right;white-space:pre;font:11.5px 'Liberation Sans', sans-serif;color:#1c1c1c;line-height:14px;letter-spacing:-0.15px">42</div>
<div style="position:absolute;left:25px;top:4px;width:91px;text-align:right;white-space:pre;font:11.5px 'Liberation Sans', sans-serif;color:#1c1c1c;line-height:14px;letter-spacing:-0.15px">Power Voltage</div>
<div style="position:absolute;left:118px;top:4px;width:91px;text-align:right;white-space:pre;font:11.5px 'Liberation Sans', sans-serif;color:#1c1c1c;line-height:14px;letter-spacing:-0.15px;color:#000">24</div>
</div>
<div style="position:absolute;left:276px;top:249px;width:24px;height:1px;background:#6d6d6d"></div>
<div style="position:absolute;left:301px;top:249px;width:186px;height:1px;background:#d4d4d4"></div>
<div style="position:absolute;left:276px;top:230px;width:210px;height:19px;overflow:hidden">
<div style="position:absolute;left:0px;top:4px;width:23px;text-align:right;white-space:pre;font:11.5px 'Liberation Sans', sans-serif;color:#1c1c1c;line-height:14px;letter-spacing:-0.15px">43</div>
<div style="position:absolute;left:25px;top:4px;width:91px;text-align:right;white-space:pre;font:11.5px 'Liberation Sans', sans-serif;color:#1c1c1c;line-height:14px;letter-spacing:-0.15px">Motor Type</div>
<div style="position:absolute;left:118px;top:4px;width:91px;text-align:right;white-space:pre;font:11.5px 'Liberation Sans', sans-serif;color:#1c1c1c;line-height:14px;letter-spacing:-0.15px;color:#000">400</div>
</div>
<div style="position:absolute;left:276px;top:269px;width:24px;height:1px;background:#6d6d6d"></div>
<div style="position:absolute;left:301px;top:269px;width:186px;height:1px;background:#d4d4d4"></div>
<div style="position:absolute;left:276px;top:250px;width:210px;height:19px;overflow:hidden">
<div style="position:absolute;left:0px;top:4px;width:23px;text-align:right;white-space:pre;font:11.5px 'Liberation Sans', sans-serif;color:#1c1c1c;line-height:14px;letter-spacing:-0.15px">44</div>
<div style="position:absolute;left:25px;top:4px;width:91px;text-align:right;white-space:pre;font:11.5px 'Liberation Sans', sans-serif;color:#1c1c1c;line-height:14px;letter-spacing:-0.15px">PPR H</div>
<div style="position:absolute;left:118px;top:4px;width:91px;text-align:right;white-space:pre;font:11.5px 'Liberation Sans', sans-serif;color:#1c1c1c;line-height:14px;letter-spacing:-0.15px;color:#000">2000</div>
</div>
<div style="position:absolute;left:276px;top:289px;width:24px;height:1px;background:#6d6d6d"></div>
<div style="position:absolute;left:301px;top:289px;width:186px;height:1px;background:#d4d4d4"></div>
<div style="position:absolute;left:276px;top:270px;width:210px;height:19px;overflow:hidden">
<div style="position:absolute;left:0px;top:4px;width:23px;text-align:right;white-space:pre;font:11.5px 'Liberation Sans', sans-serif;color:#1c1c1c;line-height:14px;letter-spacing:-0.15px">45</div>
<div style="position:absolute;left:25px;top:4px;width:91px;text-align:right;white-space:pre;font:11.5px 'Liberation Sans', sans-serif;color:#1c1c1c;line-height:14px;letter-spacing:-0.15px"></div>
<div style="position:absolute;left:118px;top:4px;width:91px;text-align:right;white-space:pre;font:11.5px 'Liberation Sans', sans-serif;color:#1c1c1c;line-height:14px;letter-spacing:-0.15px;color:#000">-&#8202;-</div>
</div>
<div style="position:absolute;left:276px;top:309px;width:24px;height:1px;background:#6d6d6d"></div>
<div style="position:absolute;left:301px;top:309px;width:186px;height:1px;background:#d4d4d4"></div>
<div style="position:absolute;left:276px;top:290px;width:210px;height:19px;overflow:hidden">
<div style="position:absolute;left:0px;top:4px;width:23px;text-align:right;white-space:pre;font:11.5px 'Liberation Sans', sans-serif;color:#1c1c1c;line-height:14px;letter-spacing:-0.15px">46</div>
<div style="position:absolute;left:25px;top:4px;width:91px;text-align:right;white-space:pre;font:11.5px 'Liberation Sans', sans-serif;color:#1c1c1c;line-height:14px;letter-spacing:-0.15px">Rated Current</div>
<div style="position:absolute;left:118px;top:4px;width:91px;text-align:right;white-space:pre;font:11.5px 'Liberation Sans', sans-serif;color:#1c1c1c;line-height:14px;letter-spacing:-0.15px;color:#000">20</div>
</div>
<div style="position:absolute;left:276px;top:329px;width:24px;height:1px;background:#6d6d6d"></div>
<div style="position:absolute;left:301px;top:329px;width:186px;height:1px;background:#d4d4d4"></div>
<div style="position:absolute;left:276px;top:310px;width:210px;height:19px;overflow:hidden">
<div style="position:absolute;left:0px;top:4px;width:23px;text-align:right;white-space:pre;font:11.5px 'Liberation Sans', sans-serif;color:#1c1c1c;line-height:14px;letter-spacing:-0.15px">47</div>
<div style="position:absolute;left:25px;top:4px;width:91px;text-align:right;white-space:pre;font:11.5px 'Liberation Sans', sans-serif;color:#1c1c1c;line-height:14px;letter-spacing:-0.15px">Current Limit</div>
<div style="position:absolute;left:118px;top:4px;width:91px;text-align:right;white-space:pre;font:11.5px 'Liberation Sans', sans-serif;color:#1c1c1c;line-height:14px;letter-spacing:-0.15px;color:#000">40</div>
</div>
<div style="position:absolute;left:276px;top:349px;width:24px;height:1px;background:#6d6d6d"></div>
<div style="position:absolute;left:301px;top:349px;width:186px;height:1px;background:#d4d4d4"></div>
<div style="position:absolute;left:276px;top:330px;width:210px;height:19px;overflow:hidden">
<div style="position:absolute;left:0px;top:4px;width:23px;text-align:right;white-space:pre;font:11.5px 'Liberation Sans', sans-serif;color:#1c1c1c;line-height:14px;letter-spacing:-0.15px">48</div>
<div style="position:absolute;left:25px;top:4px;width:91px;text-align:right;white-space:pre;font:11.5px 'Liberation Sans', sans-serif;color:#1c1c1c;line-height:14px;letter-spacing:-0.15px">Pole</div>
<div style="position:absolute;left:118px;top:4px;width:91px;text-align:right;white-space:pre;font:11.5px 'Liberation Sans', sans-serif;color:#1c1c1c;line-height:14px;letter-spacing:-0.15px;color:#000">0</div>
</div>
<div style="position:absolute;left:276px;top:369px;width:24px;height:1px;background:#6d6d6d"></div>
<div style="position:absolute;left:301px;top:369px;width:186px;height:1px;background:#d4d4d4"></div>
<div style="position:absolute;left:276px;top:350px;width:210px;height:19px;overflow:hidden">
<div style="position:absolute;left:0px;top:4px;width:23px;text-align:right;white-space:pre;font:11.5px 'Liberation Sans', sans-serif;color:#1c1c1c;line-height:14px;letter-spacing:-0.15px">49</div>
<div style="position:absolute;left:25px;top:4px;width:91px;text-align:right;white-space:pre;font:11.5px 'Liberation Sans', sans-serif;color:#1c1c1c;line-height:14px;letter-spacing:-0.15px"></div>
<div style="position:absolute;left:118px;top:4px;width:91px;text-align:right;white-space:pre;font:11.5px 'Liberation Sans', sans-serif;color:#1c1c1c;line-height:14px;letter-spacing:-0.15px;color:#000">0</div>
</div>
<div style="position:absolute;left:276px;top:389px;width:24px;height:1px;background:#6d6d6d"></div>
<div style="position:absolute;left:301px;top:389px;width:186px;height:1px;background:#d4d4d4"></div>
<div style="position:absolute;left:276px;top:370px;width:210px;height:19px;overflow:hidden">
<div style="position:absolute;left:0px;top:4px;width:23px;text-align:right;white-space:pre;font:11.5px 'Liberation Sans', sans-serif;color:#1c1c1c;line-height:14px;letter-spacing:-0.15px">50</div>
<div style="position:absolute;left:25px;top:4px;width:91px;text-align:right;white-space:pre;font:11.5px 'Liberation Sans', sans-serif;color:#1c1c1c;line-height:14px;letter-spacing:-0.15px">Voltage Limit</div>
<div style="position:absolute;left:118px;top:4px;width:91px;text-align:right;white-space:pre;font:11.5px 'Liberation Sans', sans-serif;color:#1c1c1c;line-height:14px;letter-spacing:-0.15px;color:#000">100</div>
</div>
<div style="position:absolute;left:276px;top:409px;width:24px;height:1px;background:#6d6d6d"></div>
<div style="position:absolute;left:301px;top:409px;width:186px;height:1px;background:#d4d4d4"></div>
<div style="position:absolute;left:276px;top:390px;width:210px;height:19px;overflow:hidden">
<div style="position:absolute;left:0px;top:4px;width:23px;text-align:right;white-space:pre;font:11.5px 'Liberation Sans', sans-serif;color:#1c1c1c;line-height:14px;letter-spacing:-0.15px">51</div>
<div style="position:absolute;left:25px;top:4px;width:91px;text-align:right;white-space:pre;font:11.5px 'Liberation Sans', sans-serif;color:#1c1c1c;line-height:14px;letter-spacing:-0.15px">Thermal Time</div>
<div style="position:absolute;left:118px;top:4px;width:91px;text-align:right;white-space:pre;font:11.5px 'Liberation Sans', sans-serif;color:#1c1c1c;line-height:14px;letter-spacing:-0.15px;color:#000">100</div>
</div>
<div style="position:absolute;left:276px;top:429px;width:24px;height:1px;background:#6d6d6d"></div>
<div style="position:absolute;left:301px;top:429px;width:186px;height:1px;background:#d4d4d4"></div>
<div style="position:absolute;left:276px;top:410px;width:210px;height:19px;overflow:hidden">
<div style="position:absolute;left:0px;top:4px;width:23px;text-align:right;white-space:pre;font:11.5px 'Liberation Sans', sans-serif;color:#1c1c1c;line-height:14px;letter-spacing:-0.15px">52</div>
<div style="position:absolute;left:25px;top:4px;width:91px;text-align:right;white-space:pre;font:11.5px 'Liberation Sans', sans-serif;color:#1c1c1c;line-height:14px;letter-spacing:-0.15px">Ele. angle off</div>
<div style="position:absolute;left:118px;top:4px;width:91px;text-align:right;white-space:pre;font:11.5px 'Liberation Sans', sans-serif;color:#1c1c1c;line-height:14px;letter-spacing:-0.15px;color:#000">0</div>
</div>
<div style="position:absolute;left:276px;top:449px;width:24px;height:1px;background:#6d6d6d"></div>
<div style="position:absolute;left:301px;top:449px;width:186px;height:1px;background:#d4d4d4"></div>
<div style="position:absolute;left:276px;top:430px;width:210px;height:19px;overflow:hidden">
<div style="position:absolute;left:0px;top:4px;width:23px;text-align:right;white-space:pre;font:11.5px 'Liberation Sans', sans-serif;color:#1c1c1c;line-height:14px;letter-spacing:-0.15px">53</div>
<div style="position:absolute;left:25px;top:4px;width:91px;text-align:right;white-space:pre;font:11.5px 'Liberation Sans', sans-serif;color:#1c1c1c;line-height:14px;letter-spacing:-0.15px">Servo Rig</div>
<div style="position:absolute;left:118px;top:4px;width:91px;text-align:right;white-space:pre;font:11.5px 'Liberation Sans', sans-serif;color:#1c1c1c;line-height:14px;letter-spacing:-0.15px;color:#000">-1</div>
</div>
<div style="position:absolute;left:276px;top:469px;width:24px;height:1px;background:#6d6d6d"></div>
<div style="position:absolute;left:301px;top:469px;width:186px;height:1px;background:#d4d4d4"></div>
<div style="position:absolute;left:276px;top:450px;width:210px;height:19px;overflow:hidden">
<div style="position:absolute;left:0px;top:4px;width:23px;text-align:right;white-space:pre;font:11.5px 'Liberation Sans', sans-serif;color:#1c1c1c;line-height:14px;letter-spacing:-0.15px">54</div>
<div style="position:absolute;left:25px;top:4px;width:91px;text-align:right;white-space:pre;font:11.5px 'Liberation Sans', sans-serif;color:#1c1c1c;line-height:14px;letter-spacing:-0.15px">Kpos</div>
<div style="position:absolute;left:118px;top:4px;width:91px;text-align:right;white-space:pre;font:11.5px 'Liberation Sans', sans-serif;color:#1c1c1c;line-height:14px;letter-spacing:-0.15px;color:#000">20</div>
</div>
<div style="position:absolute;left:276px;top:489px;width:24px;height:1px;background:#6d6d6d"></div>
<div style="position:absolute;left:301px;top:489px;width:186px;height:1px;background:#d4d4d4"></div>
<div style="position:absolute;left:276px;top:470px;width:210px;height:19px;overflow:hidden">
<div style="position:absolute;left:0px;top:4px;width:23px;text-align:right;white-space:pre;font:11.5px 'Liberation Sans', sans-serif;color:#1c1c1c;line-height:14px;letter-spacing:-0.15px">55</div>
<div style="position:absolute;left:25px;top:4px;width:91px;text-align:right;white-space:pre;font:11.5px 'Liberation Sans', sans-serif;color:#1c1c1c;line-height:14px;letter-spacing:-0.15px">Kvel P</div>
<div style="position:absolute;left:118px;top:4px;width:91px;text-align:right;white-space:pre;font:11.5px 'Liberation Sans', sans-serif;color:#1c1c1c;line-height:14px;letter-spacing:-0.15px;color:#000">300</div>
</div>
<div style="position:absolute;left:276px;top:509px;width:24px;height:1px;background:#6d6d6d"></div>
<div style="position:absolute;left:301px;top:509px;width:186px;height:1px;background:#d4d4d4"></div>
<div style="position:absolute;left:276px;top:490px;width:210px;height:19px;overflow:hidden">
<div style="position:absolute;left:0px;top:4px;width:23px;text-align:right;white-space:pre;font:11.5px 'Liberation Sans', sans-serif;color:#1c1c1c;line-height:14px;letter-spacing:-0.15px">56</div>
<div style="position:absolute;left:25px;top:4px;width:91px;text-align:right;white-space:pre;font:11.5px 'Liberation Sans', sans-serif;color:#1c1c1c;line-height:14px;letter-spacing:-0.15px">Kvel I</div>
<div style="position:absolute;left:118px;top:4px;width:91px;text-align:right;white-space:pre;font:11.5px 'Liberation Sans', sans-serif;color:#1c1c1c;line-height:14px;letter-spacing:-0.15px;color:#000">100</div>
</div>
<div style="position:absolute;left:276px;top:529px;width:24px;height:1px;background:#6d6d6d"></div>
<div style="position:absolute;left:301px;top:529px;width:186px;height:1px;background:#d4d4d4"></div>
<div style="position:absolute;left:276px;top:510px;width:210px;height:19px;overflow:hidden">
<div style="position:absolute;left:0px;top:4px;width:23px;text-align:right;white-space:pre;font:11.5px 'Liberation Sans', sans-serif;color:#1c1c1c;line-height:14px;letter-spacing:-0.15px">57</div>
<div style="position:absolute;left:25px;top:4px;width:91px;text-align:right;white-space:pre;font:11.5px 'Liberation Sans', sans-serif;color:#1c1c1c;line-height:14px;letter-spacing:-0.15px">Max Speed</div>
<div style="position:absolute;left:118px;top:4px;width:91px;text-align:right;white-space:pre;font:11.5px 'Liberation Sans', sans-serif;color:#1c1c1c;line-height:14px;letter-spacing:-0.15px;color:#000">3000</div>
</div>
<div style="position:absolute;left:276px;top:549px;width:24px;height:1px;background:#6d6d6d"></div>
<div style="position:absolute;left:301px;top:549px;width:186px;height:1px;background:#d4d4d4"></div>
<div style="position:absolute;left:276px;top:530px;width:210px;height:19px;overflow:hidden">
<div style="position:absolute;left:0px;top:4px;width:23px;text-align:right;white-space:pre;font:11.5px 'Liberation Sans', sans-serif;color:#1c1c1c;line-height:14px;letter-spacing:-0.15px">58</div>
<div style="position:absolute;left:25px;top:4px;width:91px;text-align:right;white-space:pre;font:11.5px 'Liberation Sans', sans-serif;color:#1c1c1c;line-height:14px;letter-spacing:-0.15px">Accel Time</div>
<div style="position:absolute;left:118px;top:4px;width:91px;text-align:right;white-space:pre;font:11.5px 'Liberation Sans', sans-serif;color:#1c1c1c;line-height:14px;letter-spacing:-0.15px;color:#000">200</div>
</div>
<div style="position:absolute;left:276px;top:569px;width:24px;height:1px;background:#6d6d6d"></div>
<div style="position:absolute;left:301px;top:569px;width:186px;height:1px;background:#d4d4d4"></div>
<div style="position:absolute;left:276px;top:550px;width:210px;height:19px;overflow:hidden">
<div style="position:absolute;left:0px;top:4px;width:23px;text-align:right;white-space:pre;font:11.5px 'Liberation Sans', sans-serif;color:#1c1c1c;line-height:14px;letter-spacing:-0.15px">59</div>
<div style="position:absolute;left:25px;top:4px;width:91px;text-align:right;white-space:pre;font:11.5px 'Liberation Sans', sans-serif;color:#1c1c1c;line-height:14px;letter-spacing:-0.15px">Jerk Time</div>
<div style="position:absolute;left:118px;top:4px;width:91px;text-align:right;white-space:pre;font:11.5px 'Liberation Sans', sans-serif;color:#1c1c1c;line-height:14px;letter-spacing:-0.15px;color:#000">40</div>
</div>
<div style="position:absolute;left:276px;top:589px;width:24px;height:1px;background:#6d6d6d"></div>
<div style="position:absolute;left:301px;top:589px;width:186px;height:1px;background:#d4d4d4"></div>
<div style="position:absolute;left:276px;top:570px;width:210px;height:19px;overflow:hidden">
<div style="position:absolute;left:0px;top:4px;width:23px;text-align:right;white-space:pre;font:11.5px 'Liberation Sans', sans-serif;color:#1c1c1c;line-height:14px;letter-spacing:-0.15px">60</div>
<div style="position:absolute;left:25px;top:4px;width:91px;text-align:right;white-space:pre;font:11.5px 'Liberation Sans', sans-serif;color:#1c1c1c;line-height:14px;letter-spacing:-0.15px">Mode</div>
<div style="position:absolute;left:118px;top:4px;width:91px;text-align:right;white-space:pre;font:11.5px 'Liberation Sans', sans-serif;color:#1c1c1c;line-height:14px;letter-spacing:-0.15px;color:#000">2</div>
</div>
<div style="position:absolute;left:276px;top:609px;width:24px;height:1px;background:#6d6d6d"></div>
<div style="position:absolute;left:301px;top:609px;width:186px;height:1px;background:#d4d4d4"></div>
<div style="position:absolute;left:276px;top:590px;width:210px;height:19px;overflow:hidden">
<div style="position:absolute;left:0px;top:4px;width:23px;text-align:right;white-space:pre;font:11.5px 'Liberation Sans', sans-serif;color:#1c1c1c;line-height:14px;letter-spacing:-0.15px">61</div>
<div style="position:absolute;left:25px;top:4px;width:91px;text-align:right;white-space:pre;font:11.5px 'Liberation Sans', sans-serif;color:#1c1c1c;line-height:14px;letter-spacing:-0.15px">Switch</div>
<div style="position:absolute;left:118px;top:4px;width:91px;text-align:right;white-space:pre;font:11.5px 'Liberation Sans', sans-serif;color:#1c1c1c;line-height:14px;letter-spacing:-0.15px;color:#000">1</div>
</div>
<div style="position:absolute;left:276px;top:629px;width:24px;height:1px;background:#6d6d6d"></div>
<div style="position:absolute;left:301px;top:629px;width:186px;height:1px;background:#d4d4d4"></div>
<div style="position:absolute;left:276px;top:610px;width:210px;height:19px;overflow:hidden">
<div style="position:absolute;left:0px;top:4px;width:23px;text-align:right;white-space:pre;font:11.5px 'Liberation Sans', sans-serif;color:#1c1c1c;line-height:14px;letter-spacing:-0.15px">62</div>
<div style="position:absolute;left:25px;top:4px;width:91px;text-align:right;white-space:pre;font:11.5px 'Liberation Sans', sans-serif;color:#1c1c1c;line-height:14px;letter-spacing:-0.15px">iLoopT</div>
<div style="position:absolute;left:118px;top:4px;width:91px;text-align:right;white-space:pre;font:11.5px 'Liberation Sans', sans-serif;color:#1c1c1c;line-height:14px;letter-spacing:-0.15px;color:#000">0</div>
</div>
<div style="position:absolute;left:276px;top:649px;width:24px;height:1px;background:#6d6d6d"></div>
<div style="position:absolute;left:301px;top:649px;width:186px;height:1px;background:#d4d4d4"></div>
<div style="position:absolute;left:276px;top:630px;width:210px;height:19px;overflow:hidden">
<div style="position:absolute;left:0px;top:4px;width:23px;text-align:right;white-space:pre;font:11.5px 'Liberation Sans', sans-serif;color:#1c1c1c;line-height:14px;letter-spacing:-0.15px">63</div>
<div style="position:absolute;left:25px;top:4px;width:91px;text-align:right;white-space:pre;font:11.5px 'Liberation Sans', sans-serif;color:#1c1c1c;line-height:14px;letter-spacing:-0.15px"></div>
<div style="position:absolute;left:118px;top:4px;width:91px;text-align:right;white-space:pre;font:11.5px 'Liberation Sans', sans-serif;color:#1c1c1c;line-height:14px;letter-spacing:-0.15px;color:#000">0</div>
</div>
<div style="position:absolute;left:276px;top:669px;width:24px;height:1px;background:#6d6d6d"></div>
<div style="position:absolute;left:301px;top:669px;width:186px;height:1px;background:#d4d4d4"></div>
<div style="position:absolute;left:276px;top:650px;width:210px;height:19px;overflow:hidden">
<div style="position:absolute;left:0px;top:4px;width:23px;text-align:right;white-space:pre;font:11.5px 'Liberation Sans', sans-serif;color:#1c1c1c;line-height:14px;letter-spacing:-0.15px">64</div>
<div style="position:absolute;left:25px;top:4px;width:91px;text-align:right;white-space:pre;font:11.5px 'Liberation Sans', sans-serif;color:#1c1c1c;line-height:14px;letter-spacing:-0.15px"></div>
<div style="position:absolute;left:118px;top:4px;width:91px;text-align:right;white-space:pre;font:11.5px 'Liberation Sans', sans-serif;color:#1c1c1c;line-height:14px;letter-spacing:-0.15px;color:#000">0</div>
</div>
<div style="position:absolute;left:276px;top:689px;width:24px;height:1px;background:#6d6d6d"></div>
<div style="position:absolute;left:301px;top:689px;width:186px;height:1px;background:#d4d4d4"></div>
<div style="position:absolute;left:276px;top:670px;width:210px;height:19px;overflow:hidden">
<div style="position:absolute;left:0px;top:4px;width:23px;text-align:right;white-space:pre;font:11.5px 'Liberation Sans', sans-serif;color:#1c1c1c;line-height:14px;letter-spacing:-0.15px">65</div>
<div style="position:absolute;left:25px;top:4px;width:91px;text-align:right;white-space:pre;font:11.5px 'Liberation Sans', sans-serif;color:#1c1c1c;line-height:14px;letter-spacing:-0.15px"></div>
<div style="position:absolute;left:118px;top:4px;width:91px;text-align:right;white-space:pre;font:11.5px 'Liberation Sans', sans-serif;color:#1c1c1c;line-height:14px;letter-spacing:-0.15px;color:#000">0</div>
</div>
<div style="position:absolute;left:519px;top:78px;width:324px;height:386px;border:1px solid #5d646c;border-radius:6px 6px 0 0;background:linear-gradient(#c3d1e0 0px,#d3dfeb 28px,#dbe6f1 60px,#dce7f2 100%);box-shadow:inset 1px 1px 0 rgba(255,255,255,0.55),inset -1px -1px 0 rgba(255,255,255,0.4)"></div>
<svg style="position:absolute;left:529px;top:89px" width="16" height="16" viewBox="0 0 16 16" shape-rendering="crispEdges"><rect x="1" y="1" width="13" height="9" fill="#fff"/><rect x="1" y="10" width="11" height="3" fill="#fff"/><rect x="1" y="13" width="8" height="1" fill="#fff"/><rect x="0" y="0" width="15" height="1" fill="#000"/><rect x="0" y="0" width="1" height="15" fill="#000"/><rect x="14" y="0" width="1" height="10" fill="#000"/><rect x="12" y="10" width="3" height="1" fill="#000"/><rect x="11" y="11" width="2" height="1" fill="#000"/><rect x="11" y="12" width="1" height="1" fill="#000"/><rect x="9" y="13" width="3" height="1" fill="#000"/><rect x="8" y="14" width="2" height="1" fill="#000"/><rect x="5" y="14" width="3" height="1" fill="#000"/><rect x="3" y="13" width="2" height="1" fill="#000"/><rect x="1" y="14" width="2" height="1" fill="#000"/><rect x="2" y="2" width="1" height="4" fill="#c01010"/><rect x="3" y="2" width="1" height="1" fill="#c01010"/><rect x="3" y="5" width="1" height="1" fill="#c01010"/><rect x="4" y="3" width="1" height="2" fill="#c01010"/><rect x="7" y="2" width="1" height="1" fill="#c01010"/><rect x="6" y="3" width="1" height="2" fill="#c01010"/><rect x="8" y="3" width="1" height="2" fill="#c01010"/><rect x="7" y="5" width="1" height="1" fill="#c01010"/><rect x="11" y="2" width="2" height="1" fill="#c01010"/><rect x="10" y="3" width="1" height="2" fill="#c01010"/><rect x="11" y="5" width="2" height="1" fill="#c01010"/><rect x="3" y="8" width="10" height="1" fill="#b4b4b4"/><rect x="3" y="11" width="7" height="1" fill="#b4b4b4"/><rect x="13" y="12" width="2" height="2" fill="#2a8a8a"/></svg>
<div style="position:absolute;left:549px;top:91px;text-align:left;white-space:pre;font:12.5px 'Liberation Sans', sans-serif;color:#8d9cad;line-height:15px;letter-spacing:-0.35px">Status.mbp</div>
<div style="position:absolute;left:735px;top:88px;width:30px;height:16px;border-radius:3px;background:linear-gradient(#d6e0ea,#cad6e2);border:1px solid #8d99a8"></div>
<div style="position:absolute;left:745px;top:96px;width:9px;height:3px;background:#fff;border:1px solid #404850;border-radius:1px"></div>
<div style="position:absolute;left:769px;top:88px;width:30px;height:16px;border-radius:3px;background:linear-gradient(#d6e0ea,#cad6e2);border:1px solid #8d99a8"></div>
<div style="position:absolute;left:779px;top:92px;width:11px;height:9px;background:#404850;border-radius:1px"></div>
<div style="position:absolute;left:780px;top:93px;width:9px;height:7px;background:#fff"></div>
<div style="position:absolute;left:782px;top:95px;width:5px;height:3px;background:#404850"></div>
<div style="position:absolute;left:783px;top:96px;width:3px;height:1px;background:#b8c6d4"></div>
<div style="position:absolute;left:803px;top:88px;width:30px;height:16px;border-radius:3px;background:linear-gradient(#d6e0ea,#cad6e2);border:1px solid #8d99a8"></div>
<svg style="position:absolute;left:812px;top:91px" width="14" height="12"><path d="M1.5 1.5H5L7 3.3L9 1.5H12.5L9.2 5.5L12.5 9.5H9L7 7.7L5 9.5H1.5L4.8 5.5Z" fill="#fff" stroke="#404850" stroke-width="1" stroke-linejoin="round"/></svg>
<div style="position:absolute;left:528px;top:109px;width:306px;height:35px;background:#fff;border-top:2px solid #6a6a6a;border-left:2px solid #6a6a6a;box-shadow:inset 0 1px 0 #a0a0a0"></div>
<div style="position:absolute;left:530px;top:111px;width:303px;height:34px;overflow:hidden">
<div style="position:absolute;left:-1px;top:-1px;text-align:left;white-space:pre;font:15px 'Liberation Sans', sans-serif;color:#000;letter-spacing:-0.15px;line-height:17px">Tx = 802: Err = 0: ID = 1: F = 04: SR = 500ms</div>
</div>
<div style="position:absolute;left:528px;top:145px;width:304px;height:308px;background:#fff;border-top:2px solid #636363;border-left:2px solid #636363;border-right:1px solid #636363;border-bottom:1px solid #636363;box-shadow:inset -1px -1px 0 #fff, 1px 1px 0 #fff"></div>
<div style="position:absolute;left:530px;top:147px;width:1px;height:307px;background:#646464"></div>
<div style="position:absolute;left:530px;top:147px;width:303px;height:0px;background:#8a8a8a"></div>
<div style="position:absolute;left:816px;top:147px;width:18px;height:307px;background:#f0f0f0"></div>
<div style="position:absolute;left:823px;top:184px;width:2px;height:31px;background:#858585"></div>
<div style="position:absolute;left:532px;top:148px;width:278px;height:21px;background:#f0f0f0"></div>
<div style="position:absolute;left:532px;top:169px;width:25px;height:285px;background:#f0f0f0"></div>
<div style="position:absolute;left:557px;top:148px;width:1px;height:306px;background:#6d6d6d"></div>
<div style="position:absolute;left:532px;top:169px;width:25px;height:1px;background:#6d6d6d"></div>
<div style="position:absolute;left:558px;top:169px;width:94px;height:1px;background:#6d6d6d"></div>
<div style="position:absolute;left:649px;top:148px;width:2px;height:21px;background:#6d6d6d"></div>
<div style="position:absolute;left:651px;top:169px;width:160px;height:1px;background:#e0e0e0"></div>
<div style="position:absolute;left:650px;top:170px;width:1px;height:284px;background:#d4d4d4"></div>
<div style="position:absolute;left:810px;top:170px;width:1px;height:284px;background:#d4d4d4"></div>
<div style="position:absolute;left:558px;top:153px;width:91px;text-align:right;white-space:pre;font:11.5px 'Liberation Sans', sans-serif;color:#1c1c1c;line-height:14px;letter-spacing:-0.15px">Name</div>
<div style="position:absolute;left:651px;top:153px;width:158px;text-align:right;white-space:pre;font:11.5px 'Liberation Sans', sans-serif;color:#1c1c1c;line-height:14px;letter-spacing:-0.15px">3x0001</div>
<div style="position:absolute;left:532px;top:189px;width:25px;height:1px;background:#6d6d6d"></div>
<div style="position:absolute;left:558px;top:189px;width:253px;height:1px;background:#d4d4d4"></div>
<div style="position:absolute;left:532px;top:170px;width:278px;height:19px;overflow:hidden">
<div style="position:absolute;left:0px;top:4px;width:24px;text-align:right;white-space:pre;font:11.5px 'Liberation Sans', sans-serif;color:#1c1c1c;line-height:14px;letter-spacing:-0.15px">10</div>
<div style="position:absolute;left:26px;top:4px;width:91px;text-align:right;white-space:pre;font:11.5px 'Liberation Sans', sans-serif;color:#1c1c1c;line-height:14px;letter-spacing:-0.15px">Axis 1       pos H</div>
<div style="position:absolute;left:119px;top:4px;width:158px;text-align:right;white-space:pre;font:11.5px 'Liberation Sans', sans-serif;color:#1c1c1c;line-height:14px;letter-spacing:-0.15px;color:#000">0</div>
</div>
<div style="position:absolute;left:532px;top:209px;width:25px;height:1px;background:#6d6d6d"></div>
<div style="position:absolute;left:558px;top:209px;width:253px;height:1px;background:#d4d4d4"></div>
<div style="position:absolute;left:532px;top:190px;width:278px;height:19px;overflow:hidden">
<div style="position:absolute;left:0px;top:4px;width:24px;text-align:right;white-space:pre;font:11.5px 'Liberation Sans', sans-serif;color:#1c1c1c;line-height:14px;letter-spacing:-0.15px">11</div>
<div style="position:absolute;left:26px;top:4px;width:91px;text-align:right;white-space:pre;font:11.5px 'Liberation Sans', sans-serif;color:#1c1c1c;line-height:14px;letter-spacing:-0.15px"></div>
<div style="position:absolute;left:119px;top:4px;width:158px;text-align:right;white-space:pre;font:11.5px 'Liberation Sans', sans-serif;color:#1c1c1c;line-height:14px;letter-spacing:-0.15px;color:#000">-&#8202;-</div>
</div>
<div style="position:absolute;left:532px;top:229px;width:25px;height:1px;background:#6d6d6d"></div>
<div style="position:absolute;left:558px;top:229px;width:253px;height:1px;background:#d4d4d4"></div>
<div style="position:absolute;left:532px;top:210px;width:278px;height:19px;overflow:hidden">
<div style="position:absolute;left:0px;top:4px;width:24px;text-align:right;white-space:pre;font:11.5px 'Liberation Sans', sans-serif;color:#1c1c1c;line-height:14px;letter-spacing:-0.15px">12</div>
<div style="position:absolute;left:26px;top:4px;width:91px;text-align:right;white-space:pre;font:11.5px 'Liberation Sans', sans-serif;color:#1c1c1c;line-height:14px;letter-spacing:-0.15px">vel</div>
<div style="position:absolute;left:119px;top:4px;width:158px;text-align:right;white-space:pre;font:11.5px 'Liberation Sans', sans-serif;color:#1c1c1c;line-height:14px;letter-spacing:-0.15px;color:#000">0</div>
</div>
<div style="position:absolute;left:532px;top:249px;width:25px;height:1px;background:#6d6d6d"></div>
<div style="position:absolute;left:558px;top:249px;width:253px;height:1px;background:#d4d4d4"></div>
<div style="position:absolute;left:532px;top:230px;width:278px;height:19px;overflow:hidden">
<div style="position:absolute;left:0px;top:4px;width:24px;text-align:right;white-space:pre;font:11.5px 'Liberation Sans', sans-serif;color:#1c1c1c;line-height:14px;letter-spacing:-0.15px">13</div>
<div style="position:absolute;left:26px;top:4px;width:91px;text-align:right;white-space:pre;font:11.5px 'Liberation Sans', sans-serif;color:#1c1c1c;line-height:14px;letter-spacing:-0.15px">statasBit</div>
<div style="position:absolute;left:119px;top:4px;width:158px;text-align:right;white-space:pre;font:11.5px 'Liberation Sans', sans-serif;color:#1c1c1c;line-height:14px;letter-spacing:-0.15px;color:#000">0000 0000 0000 0000</div>
</div>
<div style="position:absolute;left:532px;top:269px;width:25px;height:1px;background:#6d6d6d"></div>
<div style="position:absolute;left:558px;top:269px;width:253px;height:1px;background:#d4d4d4"></div>
<div style="position:absolute;left:532px;top:250px;width:278px;height:19px;overflow:hidden">
<div style="position:absolute;left:0px;top:4px;width:24px;text-align:right;white-space:pre;font:11.5px 'Liberation Sans', sans-serif;color:#1c1c1c;line-height:14px;letter-spacing:-0.15px">14</div>
<div style="position:absolute;left:26px;top:4px;width:91px;text-align:right;white-space:pre;font:11.5px 'Liberation Sans', sans-serif;color:#1c1c1c;line-height:14px;letter-spacing:-0.15px">alarmBit</div>
<div style="position:absolute;left:119px;top:4px;width:158px;text-align:right;white-space:pre;font:11.5px 'Liberation Sans', sans-serif;color:#1c1c1c;line-height:14px;letter-spacing:-0.15px;color:#000">0000 0000 0000 0000</div>
</div>
<div style="position:absolute;left:532px;top:289px;width:25px;height:1px;background:#6d6d6d"></div>
<div style="position:absolute;left:558px;top:289px;width:253px;height:1px;background:#d4d4d4"></div>
<div style="position:absolute;left:532px;top:270px;width:278px;height:19px;overflow:hidden">
<div style="position:absolute;left:0px;top:4px;width:24px;text-align:right;white-space:pre;font:11.5px 'Liberation Sans', sans-serif;color:#1c1c1c;line-height:14px;letter-spacing:-0.15px">15</div>
<div style="position:absolute;left:26px;top:4px;width:91px;text-align:right;white-space:pre;font:11.5px 'Liberation Sans', sans-serif;color:#1c1c1c;line-height:14px;letter-spacing:-0.15px">pos err H</div>
<div style="position:absolute;left:119px;top:4px;width:158px;text-align:right;white-space:pre;font:11.5px 'Liberation Sans', sans-serif;color:#1c1c1c;line-height:14px;letter-spacing:-0.15px;color:#000">0</div>
</div>
<div style="position:absolute;left:532px;top:309px;width:25px;height:1px;background:#6d6d6d"></div>
<div style="position:absolute;left:558px;top:309px;width:253px;height:1px;background:#d4d4d4"></div>
<div style="position:absolute;left:532px;top:290px;width:278px;height:19px;overflow:hidden">
<div style="position:absolute;left:0px;top:4px;width:24px;text-align:right;white-space:pre;font:11.5px 'Liberation Sans', sans-serif;color:#1c1c1c;line-height:14px;letter-spacing:-0.15px">16</div>
<div style="position:absolute;left:26px;top:4px;width:91px;text-align:right;white-space:pre;font:11.5px 'Liberation Sans', sans-serif;color:#1c1c1c;line-height:14px;letter-spacing:-0.15px"></div>
<div style="position:absolute;left:119px;top:4px;width:158px;text-align:right;white-space:pre;font:11.5px 'Liberation Sans', sans-serif;color:#1c1c1c;line-height:14px;letter-spacing:-0.15px;color:#000">-&#8202;-</div>
</div>
<div style="position:absolute;left:532px;top:329px;width:25px;height:1px;background:#6d6d6d"></div>
<div style="position:absolute;left:558px;top:329px;width:253px;height:1px;background:#d4d4d4"></div>
<div style="position:absolute;left:532px;top:310px;width:278px;height:19px;overflow:hidden">
<div style="position:absolute;left:0px;top:4px;width:24px;text-align:right;white-space:pre;font:11.5px 'Liberation Sans', sans-serif;color:#1c1c1c;line-height:14px;letter-spacing:-0.15px">17</div>
<div style="position:absolute;left:26px;top:4px;width:91px;text-align:right;white-space:pre;font:11.5px 'Liberation Sans', sans-serif;color:#1c1c1c;line-height:14px;letter-spacing:-0.15px"></div>
<div style="position:absolute;left:119px;top:4px;width:158px;text-align:right;white-space:pre;font:11.5px 'Liberation Sans', sans-serif;color:#1c1c1c;line-height:14px;letter-spacing:-0.15px;color:#000">0</div>
</div>
<div style="position:absolute;left:532px;top:349px;width:25px;height:1px;background:#6d6d6d"></div>
<div style="position:absolute;left:558px;top:349px;width:253px;height:1px;background:#d4d4d4"></div>
<div style="position:absolute;left:532px;top:330px;width:278px;height:19px;overflow:hidden">
<div style="position:absolute;left:0px;top:4px;width:24px;text-align:right;white-space:pre;font:11.5px 'Liberation Sans', sans-serif;color:#1c1c1c;line-height:14px;letter-spacing:-0.15px">18</div>
<div style="position:absolute;left:26px;top:4px;width:91px;text-align:right;white-space:pre;font:11.5px 'Liberation Sans', sans-serif;color:#1c1c1c;line-height:14px;letter-spacing:-0.15px">current</div>
<div style="position:absolute;left:119px;top:4px;width:158px;text-align:right;white-space:pre;font:11.5px 'Liberation Sans', sans-serif;color:#1c1c1c;line-height:14px;letter-spacing:-0.15px;color:#000">0</div>
</div>
<div style="position:absolute;left:532px;top:369px;width:25px;height:1px;background:#6d6d6d"></div>
<div style="position:absolute;left:558px;top:369px;width:253px;height:1px;background:#d4d4d4"></div>
<div style="position:absolute;left:532px;top:350px;width:278px;height:19px;overflow:hidden">
<div style="position:absolute;left:0px;top:4px;width:24px;text-align:right;white-space:pre;font:11.5px 'Liberation Sans', sans-serif;color:#1c1c1c;line-height:14px;letter-spacing:-0.15px">19</div>
<div style="position:absolute;left:26px;top:4px;width:91px;text-align:right;white-space:pre;font:11.5px 'Liberation Sans', sans-serif;color:#1c1c1c;line-height:14px;letter-spacing:-0.15px">thermal</div>
<div style="position:absolute;left:119px;top:4px;width:158px;text-align:right;white-space:pre;font:11.5px 'Liberation Sans', sans-serif;color:#1c1c1c;line-height:14px;letter-spacing:-0.15px;color:#000">50</div>
</div>
<div style="position:absolute;left:532px;top:389px;width:25px;height:1px;background:#6d6d6d"></div>
<div style="position:absolute;left:558px;top:389px;width:253px;height:1px;background:#d4d4d4"></div>
<div style="position:absolute;left:532px;top:370px;width:278px;height:19px;overflow:hidden">
<div style="position:absolute;left:0px;top:4px;width:24px;text-align:right;white-space:pre;font:11.5px 'Liberation Sans', sans-serif;color:#1c1c1c;line-height:14px;letter-spacing:-0.15px">20</div>
<div style="position:absolute;left:26px;top:4px;width:91px;text-align:right;white-space:pre;font:11.5px 'Liberation Sans', sans-serif;color:#1c1c1c;line-height:14px;letter-spacing:-0.15px">Ele.angle</div>
<div style="position:absolute;left:119px;top:4px;width:158px;text-align:right;white-space:pre;font:11.5px 'Liberation Sans', sans-serif;color:#1c1c1c;line-height:14px;letter-spacing:-0.15px;color:#000">0</div>
</div>
<div style="position:absolute;left:532px;top:409px;width:25px;height:1px;background:#6d6d6d"></div>
<div style="position:absolute;left:558px;top:409px;width:253px;height:1px;background:#d4d4d4"></div>
<div style="position:absolute;left:532px;top:390px;width:278px;height:19px;overflow:hidden">
<div style="position:absolute;left:0px;top:4px;width:24px;text-align:right;white-space:pre;font:11.5px 'Liberation Sans', sans-serif;color:#1c1c1c;line-height:14px;letter-spacing:-0.15px">21</div>
<div style="position:absolute;left:26px;top:4px;width:91px;text-align:right;white-space:pre;font:11.5px 'Liberation Sans', sans-serif;color:#1c1c1c;line-height:14px;letter-spacing:-0.15px">mode</div>
<div style="position:absolute;left:119px;top:4px;width:158px;text-align:right;white-space:pre;font:11.5px 'Liberation Sans', sans-serif;color:#1c1c1c;line-height:14px;letter-spacing:-0.15px;color:#000">2</div>
</div>
<div style="position:absolute;left:532px;top:429px;width:25px;height:1px;background:#6d6d6d"></div>
<div style="position:absolute;left:558px;top:429px;width:253px;height:1px;background:#d4d4d4"></div>
<div style="position:absolute;left:532px;top:410px;width:278px;height:19px;overflow:hidden">
<div style="position:absolute;left:0px;top:4px;width:24px;text-align:right;white-space:pre;font:11.5px 'Liberation Sans', sans-serif;color:#1c1c1c;line-height:14px;letter-spacing:-0.15px">22</div>
<div style="position:absolute;left:26px;top:4px;width:91px;text-align:right;white-space:pre;font:11.5px 'Liberation Sans', sans-serif;color:#1c1c1c;line-height:14px;letter-spacing:-0.15px">pos ref H</div>
<div style="position:absolute;left:119px;top:4px;width:158px;text-align:right;white-space:pre;font:11.5px 'Liberation Sans', sans-serif;color:#1c1c1c;line-height:14px;letter-spacing:-0.15px;color:#000">0</div>
</div>
<div style="position:absolute;left:532px;top:449px;width:25px;height:1px;background:#6d6d6d"></div>
<div style="position:absolute;left:558px;top:449px;width:253px;height:1px;background:#d4d4d4"></div>
<div style="position:absolute;left:532px;top:430px;width:278px;height:19px;overflow:hidden">
<div style="position:absolute;left:0px;top:4px;width:24px;text-align:right;white-space:pre;font:11.5px 'Liberation Sans', sans-serif;color:#1c1c1c;line-height:14px;letter-spacing:-0.15px">23</div>
<div style="position:absolute;left:26px;top:4px;width:91px;text-align:right;white-space:pre;font:11.5px 'Liberation Sans', sans-serif;color:#1c1c1c;line-height:14px;letter-spacing:-0.15px"></div>
<div style="position:absolute;left:119px;top:4px;width:158px;text-align:right;white-space:pre;font:11.5px 'Liberation Sans', sans-serif;color:#1c1c1c;line-height:14px;letter-spacing:-0.15px;color:#000">-&#8202;-</div>
</div>
<div style="position:absolute;left:532px;top:450px;width:278px;height:4px;overflow:hidden">
<div style="position:absolute;left:0px;top:4px;width:24px;text-align:right;white-space:pre;font:11.5px 'Liberation Sans', sans-serif;color:#1c1c1c;line-height:14px;letter-spacing:-0.15px">24</div>
<div style="position:absolute;left:26px;top:4px;width:91px;text-align:right;white-space:pre;font:11.5px 'Liberation Sans', sans-serif;color:#1c1c1c;line-height:14px;letter-spacing:-0.15px"></div>
<div style="position:absolute;left:119px;top:4px;width:158px;text-align:right;white-space:pre;font:11.5px 'Liberation Sans', sans-serif;color:#1c1c1c;line-height:14px;letter-spacing:-0.15px;color:#000"></div>
</div>
<div style="position:absolute;left:874px;top:88px;width:223px;height:154px;border:1px solid #5d646c;border-radius:6px 6px 0 0;background:linear-gradient(#c3d1e0 0px,#d3dfeb 28px,#dbe6f1 60px,#dce7f2 100%);box-shadow:inset 1px 1px 0 rgba(255,255,255,0.55),inset -1px -1px 0 rgba(255,255,255,0.4)"></div>
<svg style="position:absolute;left:884px;top:98px" width="16" height="16" viewBox="0 0 16 16" shape-rendering="crispEdges"><rect x="1" y="1" width="13" height="9" fill="#fff"/><rect x="1" y="10" width="11" height="3" fill="#fff"/><rect x="1" y="13" width="8" height="1" fill="#fff"/><rect x="0" y="0" width="15" height="1" fill="#000"/><rect x="0" y="0" width="1" height="15" fill="#000"/><rect x="14" y="0" width="1" height="10" fill="#000"/><rect x="12" y="10" width="3" height="1" fill="#000"/><rect x="11" y="11" width="2" height="1" fill="#000"/><rect x="11" y="12" width="1" height="1" fill="#000"/><rect x="9" y="13" width="3" height="1" fill="#000"/><rect x="8" y="14" width="2" height="1" fill="#000"/><rect x="5" y="14" width="3" height="1" fill="#000"/><rect x="3" y="13" width="2" height="1" fill="#000"/><rect x="1" y="14" width="2" height="1" fill="#000"/><rect x="2" y="2" width="1" height="4" fill="#c01010"/><rect x="3" y="2" width="1" height="1" fill="#c01010"/><rect x="3" y="5" width="1" height="1" fill="#c01010"/><rect x="4" y="3" width="1" height="2" fill="#c01010"/><rect x="7" y="2" width="1" height="1" fill="#c01010"/><rect x="6" y="3" width="1" height="2" fill="#c01010"/><rect x="8" y="3" width="1" height="2" fill="#c01010"/><rect x="7" y="5" width="1" height="1" fill="#c01010"/><rect x="11" y="2" width="2" height="1" fill="#c01010"/><rect x="10" y="3" width="1" height="2" fill="#c01010"/><rect x="11" y="5" width="2" height="1" fill="#c01010"/><rect x="3" y="8" width="10" height="1" fill="#b4b4b4"/><rect x="3" y="11" width="7" height="1" fill="#b4b4b4"/><rect x="13" y="12" width="2" height="2" fill="#2a8a8a"/></svg>
<div style="position:absolute;left:904px;top:100px;text-align:left;white-space:pre;font:12.5px 'Liberation Sans', sans-serif;color:#8d9cad;line-height:15px;letter-spacing:-0.35px">! Emergnecy....</div>
<div style="position:absolute;left:989px;top:98px;width:30px;height:16px;border-radius:3px;background:linear-gradient(#d6e0ea,#cad6e2);border:1px solid #8d99a8"></div>
<div style="position:absolute;left:999px;top:106px;width:9px;height:3px;background:#fff;border:1px solid #404850;border-radius:1px"></div>
<div style="position:absolute;left:1023px;top:98px;width:30px;height:16px;border-radius:3px;background:linear-gradient(#d6e0ea,#cad6e2);border:1px solid #8d99a8"></div>
<div style="position:absolute;left:1033px;top:102px;width:11px;height:9px;background:#404850;border-radius:1px"></div>
<div style="position:absolute;left:1034px;top:103px;width:9px;height:7px;background:#fff"></div>
<div style="position:absolute;left:1036px;top:105px;width:5px;height:3px;background:#404850"></div>
<div style="position:absolute;left:1037px;top:106px;width:3px;height:1px;background:#b8c6d4"></div>
<div style="position:absolute;left:1057px;top:98px;width:30px;height:16px;border-radius:3px;background:linear-gradient(#d6e0ea,#cad6e2);border:1px solid #8d99a8"></div>
<svg style="position:absolute;left:1066px;top:101px" width="14" height="12"><path d="M1.5 1.5H5L7 3.3L9 1.5H12.5L9.2 5.5L12.5 9.5H9L7 7.7L5 9.5H1.5L4.8 5.5Z" fill="#fff" stroke="#404850" stroke-width="1" stroke-linejoin="round"/></svg>
<div style="position:absolute;left:883px;top:119px;width:205px;height:35px;background:#fff;border-top:2px solid #6a6a6a;border-left:2px solid #6a6a6a;box-shadow:inset 0 1px 0 #a0a0a0"></div>
<div style="position:absolute;left:885px;top:121px;width:202px;height:34px;overflow:hidden">
<div style="position:absolute;left:-1px;top:-1px;text-align:left;white-space:pre;font:15px 'Liberation Sans', sans-serif;color:#000;letter-spacing:-0.15px;line-height:17px">Tx = 0: Err = 0: ID = 1: F = 16: SR = 500ms</div>
</div>
<div style="position:absolute;left:883px;top:155px;width:204px;height:77px;background:#fff;border-top:2px solid #636363;border-left:2px solid #636363;border-right:1px solid #636363;border-bottom:1px solid #636363;box-shadow:inset -1px -1px 0 #fff, 1px 1px 0 #fff"></div>
<div style="position:absolute;left:885px;top:157px;width:1px;height:76px;background:#646464"></div>
<div style="position:absolute;left:885px;top:157px;width:203px;height:0px;background:#8a8a8a"></div>
<div style="position:absolute;left:887px;top:158px;width:191px;height:21px;background:#f0f0f0"></div>
<div style="position:absolute;left:887px;top:179px;width:13px;height:41px;background:#f0f0f0"></div>
<div style="position:absolute;left:900px;top:158px;width:1px;height:62px;background:#6d6d6d"></div>
<div style="position:absolute;left:887px;top:179px;width:13px;height:1px;background:#6d6d6d"></div>
<div style="position:absolute;left:901px;top:179px;width:90px;height:1px;background:#6d6d6d"></div>
<div style="position:absolute;left:988px;top:158px;width:2px;height:21px;background:#6d6d6d"></div>
<div style="position:absolute;left:990px;top:179px;width:89px;height:1px;background:#e0e0e0"></div>
<div style="position:absolute;left:989px;top:180px;width:1px;height:40px;background:#d4d4d4"></div>
<div style="position:absolute;left:1078px;top:180px;width:1px;height:40px;background:#d4d4d4"></div>
<div style="position:absolute;left:901px;top:163px;width:87px;text-align:right;white-space:pre;font:11.5px 'Liberation Sans', sans-serif;color:#1c1c1c;line-height:14px;letter-spacing:-0.15px">Name</div>
<div style="position:absolute;left:990px;top:163px;width:87px;text-align:right;white-space:pre;font:11.5px 'Liberation Sans', sans-serif;color:#1c1c1c;line-height:14px;letter-spacing:-0.15px">4x0002</div>
<div style="position:absolute;left:887px;top:199px;width:13px;height:1px;background:#6d6d6d"></div>
<div style="position:absolute;left:901px;top:199px;width:178px;height:1px;background:#d4d4d4"></div>
<div style="position:absolute;left:887px;top:180px;width:191px;height:19px;overflow:hidden">
<div style="position:absolute;left:0px;top:4px;width:12px;text-align:right;white-space:pre;font:11.5px 'Liberation Sans', sans-serif;color:#1c1c1c;line-height:14px;letter-spacing:-0.15px">2</div>
<div style="position:absolute;left:14px;top:4px;width:87px;text-align:right;white-space:pre;font:11.5px 'Liberation Sans', sans-serif;color:#1c1c1c;line-height:14px;letter-spacing:-0.15px">Axis bit stream</div>
<div style="position:absolute;left:103px;top:4px;width:87px;text-align:right;white-space:pre;font:11.5px 'Liberation Sans', sans-serif;color:#1c1c1c;line-height:14px;letter-spacing:-0.15px;color:#000">255</div>
</div>
<div style="position:absolute;left:887px;top:219px;width:13px;height:1px;background:#6d6d6d"></div>
<div style="position:absolute;left:901px;top:219px;width:178px;height:1px;background:#d4d4d4"></div>
<div style="position:absolute;left:990px;top:200px;width:88px;height:19px;background:#fff"></div>
<div style="position:absolute;left:991px;top:201px;width:87px;height:17px;background:#0078d7"></div>
<div style="position:absolute;left:887px;top:199px;width:1px;height:20px;background:#6d6d6d"></div>
<div style="position:absolute;left:888px;top:199px;width:1px;height:20px;background:#a0a0a0"></div>
<div style="position:absolute;left:887px;top:200px;width:191px;height:19px;overflow:hidden">
<div style="position:absolute;left:0px;top:4px;width:12px;text-align:right;white-space:pre;font:11.5px 'Liberation Sans', sans-serif;color:#1c1c1c;line-height:14px;letter-spacing:-0.15px">3</div>
<div style="position:absolute;left:14px;top:4px;width:87px;text-align:right;white-space:pre;font:11.5px 'Liberation Sans', sans-serif;color:#1c1c1c;line-height:14px;letter-spacing:-0.15px">Command1</div>
<div style="position:absolute;left:103px;top:4px;width:87px;text-align:right;white-space:pre;font:11.5px 'Liberation Sans', sans-serif;color:#1c1c1c;line-height:14px;letter-spacing:-0.15px;color:#fff">4</div>
</div>
<div style="position:absolute;left:874px;top:248px;width:228px;height:304px;border:1px solid #1e2226;border-radius:6px 6px 0 0;background:linear-gradient(#bad0e8 0px,#a9c5e4 28px,#b0cdec 60px,#b6d0ea 100%);box-shadow:inset 1px 1px 0 rgba(255,255,255,0.55),inset -1px -1px 0 rgba(255,255,255,0.4)"></div>
<div style="position:absolute;left:875px;top:552px;width:228px;height:1px;background:#90d4f2"></div>
<svg style="position:absolute;left:884px;top:258px" width="16" height="16" viewBox="0 0 16 16" shape-rendering="crispEdges"><rect x="1" y="1" width="13" height="9" fill="#fff"/><rect x="1" y="10" width="11" height="3" fill="#fff"/><rect x="1" y="13" width="8" height="1" fill="#fff"/><rect x="0" y="0" width="15" height="1" fill="#000"/><rect x="0" y="0" width="1" height="15" fill="#000"/><rect x="14" y="0" width="1" height="10" fill="#000"/><rect x="12" y="10" width="3" height="1" fill="#000"/><rect x="11" y="11" width="2" height="1" fill="#000"/><rect x="11" y="12" width="1" height="1" fill="#000"/><rect x="9" y="13" width="3" height="1" fill="#000"/><rect x="8" y="14" width="2" height="1" fill="#000"/><rect x="5" y="14" width="3" height="1" fill="#000"/><rect x="3" y="13" width="2" height="1" fill="#000"/><rect x="1" y="14" width="2" height="1" fill="#000"/><rect x="2" y="2" width="1" height="4" fill="#c01010"/><rect x="3" y="2" width="1" height="1" fill="#c01010"/><rect x="3" y="5" width="1" height="1" fill="#c01010"/><rect x="4" y="3" width="1" height="2" fill="#c01010"/><rect x="7" y="2" width="1" height="1" fill="#c01010"/><rect x="6" y="3" width="1" height="2" fill="#c01010"/><rect x="8" y="3" width="1" height="2" fill="#c01010"/><rect x="7" y="5" width="1" height="1" fill="#c01010"/><rect x="11" y="2" width="2" height="1" fill="#c01010"/><rect x="10" y="3" width="1" height="2" fill="#c01010"/><rect x="11" y="5" width="2" height="1" fill="#c01010"/><rect x="3" y="8" width="10" height="1" fill="#b4b4b4"/><rect x="3" y="11" width="7" height="1" fill="#b4b4b4"/><rect x="13" y="12" width="2" height="2" fill="#2a8a8a"/></svg>
<div style="position:absolute;left:904px;top:260px;text-align:left;white-space:pre;font:12.5px 'Liberation Sans', sans-serif;color:#1a1a1a;line-height:15px;letter-spacing:-0.35px">Command.mbp</div>
<div style="position:absolute;left:994px;top:257px;width:30px;height:16px;border-radius:3px;background:linear-gradient(#d9e6f3,#c6d9ec 45%,#a9c4e0 55%,#bcd3ea);border:1px solid #56687e"></div>
<div style="position:absolute;left:1004px;top:265px;width:9px;height:3px;background:#fff;border:1px solid #404850;border-radius:1px"></div>
<div style="position:absolute;left:1028px;top:257px;width:30px;height:16px;border-radius:3px;background:linear-gradient(#d9e6f3,#c6d9ec 45%,#a9c4e0 55%,#bcd3ea);border:1px solid #56687e"></div>
<div style="position:absolute;left:1038px;top:261px;width:11px;height:9px;background:#404850;border-radius:1px"></div>
<div style="position:absolute;left:1039px;top:262px;width:9px;height:7px;background:#fff"></div>
<div style="position:absolute;left:1041px;top:264px;width:5px;height:3px;background:#404850"></div>
<div style="position:absolute;left:1042px;top:265px;width:3px;height:1px;background:#b8c6d4"></div>
<div style="position:absolute;left:1062px;top:257px;width:30px;height:16px;border-radius:3px;background:linear-gradient(#e8a898,#d77a66 45%,#c4452c 55%,#d0583e);border:1px solid #3c2020"></div>
<svg style="position:absolute;left:1071px;top:260px" width="14" height="12"><path d="M1.5 1.5H5L7 3.3L9 1.5H12.5L9.2 5.5L12.5 9.5H9L7 7.7L5 9.5H1.5L4.8 5.5Z" fill="#fff" stroke="#602820" stroke-width="1" stroke-linejoin="round"/></svg>
<div style="position:absolute;left:883px;top:279px;width:210px;height:34px;background:#fff;border-top:2px solid #6a6a6a;border-left:2px solid #6a6a6a;box-shadow:inset 0 1px 0 #a0a0a0"></div>
<div style="position:absolute;left:885px;top:281px;width:207px;height:33px;overflow:hidden">
<div style="position:absolute;left:-1px;top:-1px;text-align:left;white-space:pre;font:15px 'Liberation Sans', sans-serif;color:#000;letter-spacing:-0.15px;line-height:17px">Tx = 0: Err = 0: ID = 1: F = 16: SR = 500ms</div>
</div>
<div style="position:absolute;left:883px;top:314px;width:208px;height:227px;background:#fff;border-top:2px solid #636363;border-left:2px solid #636363;border-right:1px solid #636363;border-bottom:1px solid #636363;box-shadow:inset -1px -1px 0 #fff, 1px 1px 0 #fff"></div>
<div style="position:absolute;left:885px;top:316px;width:1px;height:226px;background:#646464"></div>
<div style="position:absolute;left:885px;top:316px;width:207px;height:0px;background:#8a8a8a"></div>
<div style="position:absolute;left:887px;top:317px;width:197px;height:21px;background:#f0f0f0"></div>
<div style="position:absolute;left:887px;top:338px;width:19px;height:201px;background:#f0f0f0"></div>
<div style="position:absolute;left:906px;top:317px;width:1px;height:222px;background:#6d6d6d"></div>
<div style="position:absolute;left:887px;top:338px;width:19px;height:1px;background:#6d6d6d"></div>
<div style="position:absolute;left:907px;top:338px;width:91px;height:1px;background:#6d6d6d"></div>
<div style="position:absolute;left:995px;top:317px;width:2px;height:21px;background:#6d6d6d"></div>
<div style="position:absolute;left:997px;top:338px;width:88px;height:1px;background:#e0e0e0"></div>
<div style="position:absolute;left:996px;top:339px;width:1px;height:200px;background:#d4d4d4"></div>
<div style="position:absolute;left:1084px;top:339px;width:1px;height:200px;background:#d4d4d4"></div>
<div style="position:absolute;left:907px;top:322px;width:88px;text-align:right;white-space:pre;font:11.5px 'Liberation Sans', sans-serif;color:#1c1c1c;line-height:14px;letter-spacing:-0.15px">Name</div>
<div style="position:absolute;left:997px;top:322px;width:86px;text-align:right;white-space:pre;font:11.5px 'Liberation Sans', sans-serif;color:#1c1c1c;line-height:14px;letter-spacing:-0.15px">4x0002</div>
<div style="position:absolute;left:887px;top:358px;width:19px;height:1px;background:#6d6d6d"></div>
<div style="position:absolute;left:907px;top:358px;width:178px;height:1px;background:#d4d4d4"></div>
<div style="position:absolute;left:887px;top:339px;width:197px;height:19px;overflow:hidden">
<div style="position:absolute;left:0px;top:4px;width:18px;text-align:right;white-space:pre;font:11.5px 'Liberation Sans', sans-serif;color:#1c1c1c;line-height:14px;letter-spacing:-0.15px">2</div>
<div style="position:absolute;left:20px;top:4px;width:88px;text-align:right;white-space:pre;font:11.5px 'Liberation Sans', sans-serif;color:#1c1c1c;line-height:14px;letter-spacing:-0.15px">Axis bit stream</div>
<div style="position:absolute;left:110px;top:4px;width:86px;text-align:right;white-space:pre;font:11.5px 'Liberation Sans', sans-serif;color:#1c1c1c;line-height:14px;letter-spacing:-0.15px;color:#000">8</div>
</div>
<div style="position:absolute;left:887px;top:378px;width:19px;height:1px;background:#6d6d6d"></div>
<div style="position:absolute;left:907px;top:378px;width:178px;height:1px;background:#d4d4d4"></div>
<div style="position:absolute;left:887px;top:359px;width:197px;height:19px;overflow:hidden">
<div style="position:absolute;left:0px;top:4px;width:18px;text-align:right;white-space:pre;font:11.5px 'Liberation Sans', sans-serif;color:#1c1c1c;line-height:14px;letter-spacing:-0.15px">3</div>
<div style="position:absolute;left:20px;top:4px;width:88px;text-align:right;white-space:pre;font:11.5px 'Liberation Sans', sans-serif;color:#1c1c1c;line-height:14px;letter-spacing:-0.15px">Command1</div>
<div style="position:absolute;left:110px;top:4px;width:86px;text-align:right;white-space:pre;font:11.5px 'Liberation Sans', sans-serif;color:#1c1c1c;line-height:14px;letter-spacing:-0.15px;color:#000">13</div>
</div>
<div style="position:absolute;left:887px;top:398px;width:19px;height:1px;background:#6d6d6d"></div>
<div style="position:absolute;left:907px;top:398px;width:178px;height:1px;background:#d4d4d4"></div>
<div style="position:absolute;left:887px;top:379px;width:197px;height:19px;overflow:hidden">
<div style="position:absolute;left:0px;top:4px;width:18px;text-align:right;white-space:pre;font:11.5px 'Liberation Sans', sans-serif;color:#1c1c1c;line-height:14px;letter-spacing:-0.15px">4</div>
<div style="position:absolute;left:20px;top:4px;width:88px;text-align:right;white-space:pre;font:11.5px 'Liberation Sans', sans-serif;color:#1c1c1c;line-height:14px;letter-spacing:-0.15px">Command2</div>
<div style="position:absolute;left:110px;top:4px;width:86px;text-align:right;white-space:pre;font:11.5px 'Liberation Sans', sans-serif;color:#1c1c1c;line-height:14px;letter-spacing:-0.15px;color:#000">0</div>
</div>
<div style="position:absolute;left:887px;top:418px;width:19px;height:1px;background:#6d6d6d"></div>
<div style="position:absolute;left:907px;top:418px;width:178px;height:1px;background:#d4d4d4"></div>
<div style="position:absolute;left:887px;top:399px;width:197px;height:19px;overflow:hidden">
<div style="position:absolute;left:0px;top:4px;width:18px;text-align:right;white-space:pre;font:11.5px 'Liberation Sans', sans-serif;color:#1c1c1c;line-height:14px;letter-spacing:-0.15px">5</div>
<div style="position:absolute;left:20px;top:4px;width:88px;text-align:right;white-space:pre;font:11.5px 'Liberation Sans', sans-serif;color:#1c1c1c;line-height:14px;letter-spacing:-0.15px"></div>
<div style="position:absolute;left:110px;top:4px;width:86px;text-align:right;white-space:pre;font:11.5px 'Liberation Sans', sans-serif;color:#1c1c1c;line-height:14px;letter-spacing:-0.15px;color:#000">-&#8202;-</div>
</div>
<div style="position:absolute;left:887px;top:438px;width:19px;height:1px;background:#6d6d6d"></div>
<div style="position:absolute;left:907px;top:438px;width:178px;height:1px;background:#d4d4d4"></div>
<div style="position:absolute;left:997px;top:419px;width:87px;height:19px;background:#fff"></div>
<div style="position:absolute;left:998px;top:420px;width:86px;height:17px;background:#0078d7"></div>
<div style="position:absolute;left:887px;top:418px;width:1px;height:20px;background:#6d6d6d"></div>
<div style="position:absolute;left:888px;top:418px;width:1px;height:20px;background:#a0a0a0"></div>
<div style="position:absolute;left:887px;top:419px;width:197px;height:19px;overflow:hidden">
<div style="position:absolute;left:0px;top:4px;width:18px;text-align:right;white-space:pre;font:11.5px 'Liberation Sans', sans-serif;color:#1c1c1c;line-height:14px;letter-spacing:-0.15px">6</div>
<div style="position:absolute;left:20px;top:4px;width:88px;text-align:right;white-space:pre;font:11.5px 'Liberation Sans', sans-serif;color:#1c1c1c;line-height:14px;letter-spacing:-0.15px">Command3</div>
<div style="position:absolute;left:110px;top:4px;width:86px;text-align:right;white-space:pre;font:11.5px 'Liberation Sans', sans-serif;color:#1c1c1c;line-height:14px;letter-spacing:-0.15px;color:#fff">0</div>
</div>
<div style="position:absolute;left:887px;top:458px;width:19px;height:1px;background:#6d6d6d"></div>
<div style="position:absolute;left:907px;top:458px;width:178px;height:1px;background:#d4d4d4"></div>
<div style="position:absolute;left:887px;top:439px;width:197px;height:19px;overflow:hidden">
<div style="position:absolute;left:0px;top:4px;width:18px;text-align:right;white-space:pre;font:11.5px 'Liberation Sans', sans-serif;color:#1c1c1c;line-height:14px;letter-spacing:-0.15px">7</div>
<div style="position:absolute;left:20px;top:4px;width:88px;text-align:right;white-space:pre;font:11.5px 'Liberation Sans', sans-serif;color:#1c1c1c;line-height:14px;letter-spacing:-0.15px"></div>
<div style="position:absolute;left:110px;top:4px;width:86px;text-align:right;white-space:pre;font:11.5px 'Liberation Sans', sans-serif;color:#1c1c1c;line-height:14px;letter-spacing:-0.15px;color:#000">-&#8202;-</div>
</div>
<div style="position:absolute;left:887px;top:478px;width:19px;height:1px;background:#6d6d6d"></div>
<div style="position:absolute;left:907px;top:478px;width:178px;height:1px;background:#d4d4d4"></div>
<div style="position:absolute;left:887px;top:459px;width:197px;height:19px;overflow:hidden">
<div style="position:absolute;left:0px;top:4px;width:18px;text-align:right;white-space:pre;font:11.5px 'Liberation Sans', sans-serif;color:#1c1c1c;line-height:14px;letter-spacing:-0.15px">8</div>
<div style="position:absolute;left:20px;top:4px;width:88px;text-align:right;white-space:pre;font:11.5px 'Liberation Sans', sans-serif;color:#1c1c1c;line-height:14px;letter-spacing:-0.15px">Command4</div>
<div style="position:absolute;left:110px;top:4px;width:86px;text-align:right;white-space:pre;font:11.5px 'Liberation Sans', sans-serif;color:#1c1c1c;line-height:14px;letter-spacing:-0.15px;color:#000">0</div>
</div>
<div style="position:absolute;left:887px;top:498px;width:19px;height:1px;background:#6d6d6d"></div>
<div style="position:absolute;left:907px;top:498px;width:178px;height:1px;background:#d4d4d4"></div>
<div style="position:absolute;left:887px;top:479px;width:197px;height:19px;overflow:hidden">
<div style="position:absolute;left:0px;top:4px;width:18px;text-align:right;white-space:pre;font:11.5px 'Liberation Sans', sans-serif;color:#1c1c1c;line-height:14px;letter-spacing:-0.15px">9</div>
<div style="position:absolute;left:20px;top:4px;width:88px;text-align:right;white-space:pre;font:11.5px 'Liberation Sans', sans-serif;color:#1c1c1c;line-height:14px;letter-spacing:-0.15px"></div>
<div style="position:absolute;left:110px;top:4px;width:86px;text-align:right;white-space:pre;font:11.5px 'Liberation Sans', sans-serif;color:#1c1c1c;line-height:14px;letter-spacing:-0.15px;color:#000">-&#8202;-</div>
</div>
<div style="position:absolute;left:887px;top:518px;width:19px;height:1px;background:#6d6d6d"></div>
<div style="position:absolute;left:907px;top:518px;width:178px;height:1px;background:#d4d4d4"></div>
<div style="position:absolute;left:887px;top:499px;width:197px;height:19px;overflow:hidden">
<div style="position:absolute;left:0px;top:4px;width:18px;text-align:right;white-space:pre;font:11.5px 'Liberation Sans', sans-serif;color:#1c1c1c;line-height:14px;letter-spacing:-0.15px">10</div>
<div style="position:absolute;left:20px;top:4px;width:88px;text-align:right;white-space:pre;font:11.5px 'Liberation Sans', sans-serif;color:#1c1c1c;line-height:14px;letter-spacing:-0.15px">Command5</div>
<div style="position:absolute;left:110px;top:4px;width:86px;text-align:right;white-space:pre;font:11.5px 'Liberation Sans', sans-serif;color:#1c1c1c;line-height:14px;letter-spacing:-0.15px;color:#000">0</div>
</div>
<div style="position:absolute;left:887px;top:538px;width:19px;height:1px;background:#6d6d6d"></div>
<div style="position:absolute;left:907px;top:538px;width:178px;height:1px;background:#d4d4d4"></div>
<div style="position:absolute;left:887px;top:519px;width:197px;height:19px;overflow:hidden">
<div style="position:absolute;left:0px;top:4px;width:18px;text-align:right;white-space:pre;font:11.5px 'Liberation Sans', sans-serif;color:#1c1c1c;line-height:14px;letter-spacing:-0.15px">11</div>
<div style="position:absolute;left:20px;top:4px;width:88px;text-align:right;white-space:pre;font:11.5px 'Liberation Sans', sans-serif;color:#1c1c1c;line-height:14px;letter-spacing:-0.15px"></div>
<div style="position:absolute;left:110px;top:4px;width:86px;text-align:right;white-space:pre;font:11.5px 'Liberation Sans', sans-serif;color:#1c1c1c;line-height:14px;letter-spacing:-0.15px;color:#000">-&#8202;-</div>
</div>
</div></body></html>
